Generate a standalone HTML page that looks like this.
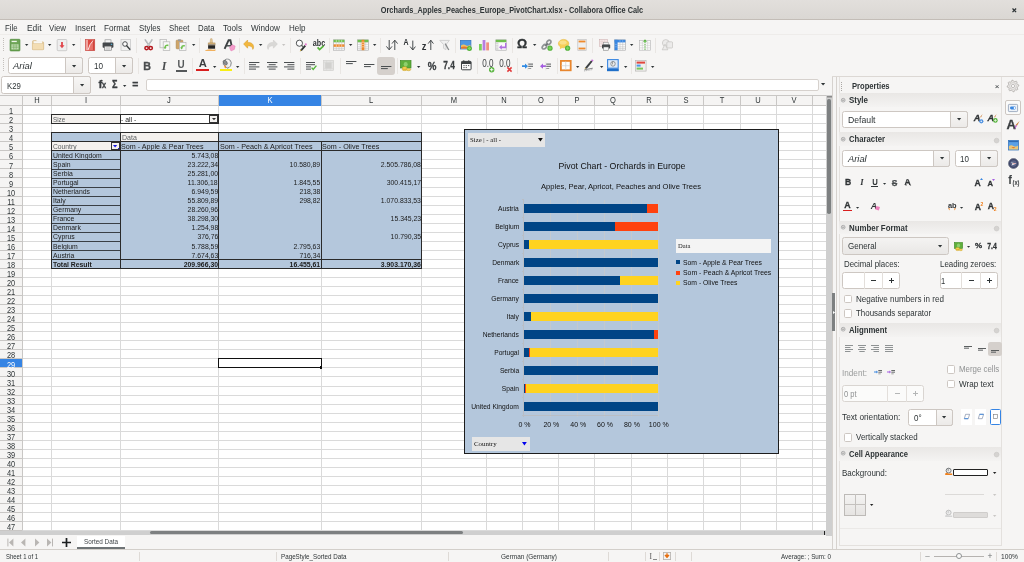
<!DOCTYPE html>
<html lang="en"><head><meta charset="utf-8"><title>Orchards_Apples_Peaches_Europe_PivotChart.xlsx - Collabora Office Calc</title>
<style>
html,body{margin:0;padding:0}
body{width:1024px;height:562px;overflow:hidden;background:#f6f5f4;position:relative;font-family:"Liberation Sans","DejaVu Sans",sans-serif;color:#2e3436}
.sf{font-family:"Liberation Serif","DejaVu Serif",serif}
#app{position:absolute;left:0;top:0;width:1024px;height:562px;overflow:hidden;will-change:transform}
#app div,#app span,#app svg{position:absolute;box-sizing:border-box}
#app svg{overflow:visible}
</style></head>
<body><div id="app">
<div style="left:0.00px;top:0.00px;width:1024.00px;height:20.00px;background:linear-gradient(#e2dfdc,#dad7d3);border-bottom:1px solid #c3bdb7;"></div>
<span id="t1" style="top:5.24px;font-size:8.6px;line-height:10.32px;color:#2e3436;white-space:pre;font-weight:bold;left:512.00px;transform:translateX(-50%) scaleX(0.8531);">Orchards_Apples_Peaches_Europe_PivotChart.xlsx - Collabora Office Calc</span>
<svg style="left:1011.50px;top:7.70px" width="4.6" height="4.6" viewBox="0 0 4.6 4.6"><path d="M0.5 0.5L4.1 4.1M4.1 0.5L0.5 4.1" stroke="#2e3436" stroke-width="1.3"/></svg>
<div style="left:0.00px;top:34.00px;width:1024.00px;height:1.00px;background:#eeecea;"></div>
<span id="t2" style="top:22.54px;font-size:8.6px;line-height:10.32px;color:#2e3436;white-space:pre;left:5.00px;transform-origin:0 50%;transform:scaleX(0.9019);">File</span>
<span id="t3" style="top:22.54px;font-size:8.6px;line-height:10.32px;color:#2e3436;white-space:pre;left:26.50px;transform-origin:0 50%;transform:scaleX(0.9789);">Edit</span>
<span id="t4" style="top:22.54px;font-size:8.6px;line-height:10.32px;color:#2e3436;white-space:pre;left:49.00px;transform-origin:0 50%;transform:scaleX(0.9197);">View</span>
<span id="t5" style="top:22.54px;font-size:8.6px;line-height:10.32px;color:#2e3436;white-space:pre;left:75.00px;transform-origin:0 50%;transform:scaleX(0.9535);">Insert</span>
<span id="t6" style="top:22.54px;font-size:8.6px;line-height:10.32px;color:#2e3436;white-space:pre;left:104.00px;transform-origin:0 50%;transform:scaleX(0.9552);">Format</span>
<span id="t7" style="top:22.54px;font-size:8.6px;line-height:10.32px;color:#2e3436;white-space:pre;left:138.50px;transform-origin:0 50%;transform:scaleX(0.9186);">Styles</span>
<span id="t8" style="top:22.54px;font-size:8.6px;line-height:10.32px;color:#2e3436;white-space:pre;left:168.50px;transform-origin:0 50%;transform:scaleX(0.9124);">Sheet</span>
<span id="t9" style="top:22.54px;font-size:8.6px;line-height:10.32px;color:#2e3436;white-space:pre;left:197.50px;transform-origin:0 50%;transform:scaleX(0.9088);">Data</span>
<span id="t10" style="top:22.54px;font-size:8.6px;line-height:10.32px;color:#2e3436;white-space:pre;left:223.00px;transform-origin:0 50%;transform:scaleX(0.9470);">Tools</span>
<span id="t11" style="top:22.54px;font-size:8.6px;line-height:10.32px;color:#2e3436;white-space:pre;left:250.50px;transform-origin:0 50%;transform:scaleX(0.9484);">Window</span>
<span id="t12" style="top:22.54px;font-size:8.6px;line-height:10.32px;color:#2e3436;white-space:pre;left:288.50px;transform-origin:0 50%;transform:scaleX(0.9329);">Help</span>
<div style="left:2.60px;top:38.00px;width:1.20px;height:1.10px;background:#c4c0bc;"></div>
<div style="left:2.60px;top:40.00px;width:1.20px;height:1.10px;background:#c4c0bc;"></div>
<div style="left:2.60px;top:42.00px;width:1.20px;height:1.10px;background:#c4c0bc;"></div>
<div style="left:2.60px;top:44.00px;width:1.20px;height:1.10px;background:#c4c0bc;"></div>
<div style="left:2.60px;top:46.00px;width:1.20px;height:1.10px;background:#c4c0bc;"></div>
<div style="left:2.60px;top:48.00px;width:1.20px;height:1.10px;background:#c4c0bc;"></div>
<div style="left:2.60px;top:50.00px;width:1.20px;height:1.10px;background:#c4c0bc;"></div>
<div style="left:2.60px;top:58.00px;width:1.20px;height:1.10px;background:#c4c0bc;"></div>
<div style="left:2.60px;top:60.00px;width:1.20px;height:1.10px;background:#c4c0bc;"></div>
<div style="left:2.60px;top:62.00px;width:1.20px;height:1.10px;background:#c4c0bc;"></div>
<div style="left:2.60px;top:64.00px;width:1.20px;height:1.10px;background:#c4c0bc;"></div>
<div style="left:2.60px;top:66.00px;width:1.20px;height:1.10px;background:#c4c0bc;"></div>
<div style="left:2.60px;top:68.00px;width:1.20px;height:1.10px;background:#c4c0bc;"></div>
<div style="left:2.60px;top:70.00px;width:1.20px;height:1.10px;background:#c4c0bc;"></div>
<div style="left:8.00px;top:57.00px;width:75.00px;height:17.00px;background:#ffffff;border:1px solid #cdc7c2;border-radius:2.5px;"></div>
<div style="left:65.00px;top:57.00px;width:18.00px;height:17.00px;background:linear-gradient(#f7f6f5,#eceae8);border:1px solid #cdc7c2;border-radius:0 2.5px 2.5px 0;"></div>
<span id="t13" style="top:60.82px;font-size:8.8px;line-height:10.56px;color:#2e3436;white-space:pre;font-style:italic;left:13.20px;transform-origin:0 50%;transform:scaleX(1.0747);">Arial</span>
<svg style="left:71.90px;top:64.60px" width="4.2" height="2.4" viewBox="0 0 4.2 2.4"><path d="M0 0H4.2L2.1 2.4Z" fill="#2e3436"/></svg>
<div style="left:88.00px;top:57.00px;width:45.00px;height:17.00px;background:#ffffff;border:1px solid #cdc7c2;border-radius:2.5px;"></div>
<div style="left:115.00px;top:57.00px;width:18.00px;height:17.00px;background:linear-gradient(#f7f6f5,#eceae8);border:1px solid #cdc7c2;border-radius:0 2.5px 2.5px 0;"></div>
<span id="t14" style="top:60.82px;font-size:8.8px;line-height:10.56px;color:#2e3436;white-space:pre;left:93.50px;transform-origin:0 50%;transform:scaleX(0.9300);">10</span>
<svg style="left:121.90px;top:64.60px" width="4.2" height="2.4" viewBox="0 0 4.2 2.4"><path d="M0 0H4.2L2.1 2.4Z" fill="#2e3436"/></svg>
<div style="left:0.50px;top:76.30px;width:90.50px;height:17.50px;background:#ffffff;border:1px solid #cdc7c2;border-radius:2.5px;"></div>
<div style="left:73.00px;top:76.30px;width:18.00px;height:17.50px;background:linear-gradient(#f7f6f5,#eceae8);border:1px solid #cdc7c2;border-radius:0 2.5px 2.5px 0;"></div>
<span id="t15" style="top:80.61px;font-size:8.4px;line-height:10.08px;color:#2e3436;white-space:pre;left:6.50px;transform-origin:0 50%;transform:scaleX(0.9300);">K29</span>
<svg style="left:79.90px;top:84.15px" width="4.2" height="2.4" viewBox="0 0 4.2 2.4"><path d="M0 0H4.2L2.1 2.4Z" fill="#2e3436"/></svg>
<span id="t16" style="top:77.56px;font-size:11.4px;line-height:13.68px;color:#3a3e40;white-space:pre;font-weight:bold;left:98.40px;-webkit-text-stroke:0.3px #3a3e40;">f</span>
<span id="t17" style="top:81.48px;font-size:8.2px;line-height:9.84px;color:#3a3e40;white-space:pre;font-weight:bold;left:102.20px;transform-origin:0 50%;transform:scaleX(0.9000);-webkit-text-stroke:0.3px #3a3e40;">x</span>
<span id="t18" style="top:78.88px;font-size:10.2px;line-height:12.24px;color:#3a3e40;white-space:pre;font-weight:bold;left:112.00px;transform-origin:0 50%;transform:scaleX(0.9000);-webkit-text-stroke:0.3px #3a3e40;">Σ</span>
<svg style="left:123.32px;top:84.64px" width="3.3600000000000003" height="1.92" viewBox="0 0 3.3600000000000003 1.92"><path d="M0 0H3.3600000000000003L1.6800000000000002 1.92Z" fill="#2e3436"/></svg>
<span id="t19" style="top:79.36px;font-size:10.4px;line-height:12.48px;color:#3a3e40;white-space:pre;font-weight:bold;left:132.20px;-webkit-text-stroke:0.3px #3a3e40;">=</span>
<div style="left:146.00px;top:79.20px;width:672.50px;height:12.20px;background:#ffffff;border:1px solid #d6d1cd;border-radius:2px;"></div>
<svg style="left:821.20px;top:83.30px" width="4.2" height="2.4" viewBox="0 0 4.2 2.4"><path d="M0 0H4.2L2.1 2.4Z" fill="#2e3436"/></svg>
<div style="left:0.00px;top:529.60px;width:826.00px;height:5.60px;background:#cfcfcf;"></div>
<div style="left:150.00px;top:530.60px;width:313.00px;height:3.60px;background:#7d8081;border-radius:2px;"></div>
<div style="left:823.70px;top:530.40px;width:1.30px;height:4.20px;background:#222;"></div>
<div style="left:826.00px;top:94.50px;width:6.00px;height:441.00px;background:#cfcfcf;"></div>
<div style="left:827.40px;top:99.40px;width:3.50px;height:114.20px;background:#7d8081;border-radius:1.8px;"></div>
<div style="left:826.50px;top:95.50px;width:5.00px;height:1.20px;background:#8a8a8a;"></div>
<div style="left:826.50px;top:97.30px;width:5.00px;height:1.00px;background:#aaaaaa;"></div>
<svg style="left:8.60px;top:538.50px" width="4" height="7" viewBox="0 0 4 7"><path d="M4.4 -0.4L0 3.5L4.4 7.4Z" fill="#b9b6b3"/><rect x="-1.6" y="-0.4" width="1" height="7.8" fill="#b9b6b3"/></svg>
<svg style="left:21.00px;top:538.50px" width="4" height="7" viewBox="0 0 4 7"><path d="M4.4 -0.4L0 3.5L4.4 7.4Z" fill="#b9b6b3"/></svg>
<svg style="left:34.50px;top:538.50px" width="4" height="7" viewBox="0 0 4 7"><path d="M0 -0.4L4.4 3.5L0 7.4Z" fill="#b9b6b3"/></svg>
<svg style="left:46.50px;top:538.50px" width="4" height="7" viewBox="0 0 4 7"><path d="M0 -0.4L4.4 3.5L0 7.4Z" fill="#b9b6b3"/><rect x="5.0" y="-0.4" width="1" height="7.8" fill="#b9b6b3"/></svg>
<svg style="left:61.50px;top:537.50px" width="9" height="9" viewBox="0 0 9 9"><path d="M4.5 0V9M0 4.5H9" stroke="#1c1f20" stroke-width="1.7" fill="none"/></svg>
<div style="left:77.00px;top:535.60px;width:47.50px;height:12.40px;background:#ffffff;"></div>
<div style="left:77.00px;top:547.40px;width:47.50px;height:1.50px;background:#6f7476;"></div>
<span id="t20" style="top:537.32px;font-size:7.8px;line-height:9.36px;color:#43474a;white-space:pre;left:100.50px;transform:translateX(-50%) scaleX(0.8171);">Sorted Data</span>
<div style="left:0.00px;top:548.80px;width:1024.00px;height:1.00px;background:#d3cfca;"></div>
<div style="left:0.00px;top:549.80px;width:1024.00px;height:12.20px;background:#f6f5f4;"></div>
<span id="t21" style="top:551.62px;font-size:7.8px;line-height:9.36px;color:#2e3436;white-space:pre;left:6.00px;transform-origin:0 50%;transform:scaleX(0.7608);">Sheet 1 of 1</span>
<div style="left:138.50px;top:551.50px;width:1.00px;height:9.50px;background:#dedad6;"></div>
<div style="left:276.00px;top:551.50px;width:1.00px;height:9.50px;background:#dedad6;"></div>
<div style="left:448.30px;top:551.50px;width:1.00px;height:9.50px;background:#dedad6;"></div>
<div style="left:608.00px;top:551.50px;width:1.00px;height:9.50px;background:#dedad6;"></div>
<div style="left:645.00px;top:551.50px;width:1.00px;height:9.50px;background:#dedad6;"></div>
<div style="left:659.00px;top:551.50px;width:1.00px;height:9.50px;background:#dedad6;"></div>
<div style="left:675.00px;top:551.50px;width:1.00px;height:9.50px;background:#dedad6;"></div>
<div style="left:690.50px;top:551.50px;width:1.00px;height:9.50px;background:#dedad6;"></div>
<div style="left:920.30px;top:551.50px;width:1.00px;height:9.50px;background:#dedad6;"></div>
<div style="left:996.30px;top:551.50px;width:1.00px;height:9.50px;background:#dedad6;"></div>
<span id="t22" style="top:551.62px;font-size:7.8px;line-height:9.36px;color:#2e3436;white-space:pre;left:281.00px;transform-origin:0 50%;transform:scaleX(0.8025);">PageStyle_Sorted Data</span>
<span id="t23" style="top:551.62px;font-size:7.8px;line-height:9.36px;color:#2e3436;white-space:pre;left:528.90px;transform:translateX(-50%) scaleX(0.8255);">German (Germany)</span>
<span id="t24" class="sf" style="top:551.70px;font-size:7.5px;line-height:9.00px;color:#555;white-space:pre;left:649.50px;">I</span>
<div style="left:653.00px;top:558.60px;width:3.50px;height:0.80px;background:#888;"></div>
<svg style="left:662.50px;top:552.00px" width="8" height="8" viewBox="0 0 8 8"><rect x="0.4" y="0.4" width="7.2" height="7.2" fill="#f4f2f0" stroke="#b5b1ad" stroke-width="0.8"/><path d="M4 1.2V4.4M2.3 3.4L4 5.4L5.7 3.4Z" stroke="#e66f10" stroke-width="1.3" fill="#e66f10" stroke-linejoin="round"/></svg>
<span id="t25" style="top:551.62px;font-size:7.8px;line-height:9.36px;color:#2e3436;white-space:pre;left:781.00px;transform-origin:0 50%;transform:scaleX(0.8030);">Average: ; Sum: 0</span>
<span id="t26" style="top:551.00px;font-size:8px;line-height:9.60px;color:#6e7273;white-space:pre;left:927.50px;transform:translateX(-50%);">–</span>
<div style="left:933.80px;top:555.70px;width:50.70px;height:1.20px;background:#b6b3b0;"></div>
<div style="left:955.90px;top:553.00px;width:6.00px;height:6.00px;background:#fbfbfa;border:1px solid #8e9192;border-radius:50%;"></div>
<span id="t27" style="top:550.90px;font-size:8.5px;line-height:10.20px;color:#6e7273;white-space:pre;left:990.00px;transform:translateX(-50%);">+</span>
<span id="t28" style="top:551.62px;font-size:7.8px;line-height:9.36px;color:#2e3436;white-space:pre;left:1000.80px;transform-origin:0 50%;transform:scaleX(0.8520);">100%</span>
<div style="left:0.00px;top:94.50px;width:826.00px;height:435.10px;background:#ffffff;"></div>
<div style="left:0.00px;top:94.50px;width:826.00px;height:11.10px;background:#f5f4f3;border-top:1px solid #c9c7c5;border-bottom:1px solid #c9c7c5;"></div>
<div style="left:0.00px;top:105.60px;width:22.50px;height:424.00px;background:#f5f4f3;"></div>
<div style="left:22.00px;top:94.50px;width:1.00px;height:435.10px;background:#c9c7c5;"></div>
<span id="t29" style="top:95.31px;font-size:8.4px;line-height:10.08px;color:#2e3436;white-space:pre;left:37.00px;transform:translateX(-50%) scaleX(0.9000);">H</span>
<div style="left:51.00px;top:94.50px;width:1.00px;height:11.10px;background:#c9c7c5;"></div>
<div style="left:51.00px;top:105.60px;width:1.00px;height:424.00px;background:#dadada;"></div>
<span id="t30" style="top:95.31px;font-size:8.4px;line-height:10.08px;color:#2e3436;white-space:pre;left:85.85px;transform:translateX(-50%) scaleX(0.9000);">I</span>
<div style="left:119.70px;top:94.50px;width:1.00px;height:11.10px;background:#c9c7c5;"></div>
<div style="left:119.70px;top:105.60px;width:1.00px;height:424.00px;background:#dadada;"></div>
<span id="t31" style="top:95.31px;font-size:8.4px;line-height:10.08px;color:#2e3436;white-space:pre;left:169.40px;transform:translateX(-50%) scaleX(0.9000);">J</span>
<div style="left:218.10px;top:94.50px;width:1.00px;height:11.10px;background:#c9c7c5;"></div>
<div style="left:218.10px;top:105.60px;width:1.00px;height:424.00px;background:#dadada;"></div>
<div style="left:218.60px;top:94.50px;width:102.60px;height:11.10px;background:#3584e4;"></div>
<span id="t32" style="top:95.31px;font-size:8.4px;line-height:10.08px;color:#ffffff;white-space:pre;left:269.90px;transform:translateX(-50%) scaleX(0.9000);">K</span>
<div style="left:320.70px;top:94.50px;width:1.00px;height:11.10px;background:#c9c7c5;"></div>
<div style="left:320.70px;top:105.60px;width:1.00px;height:424.00px;background:#dadada;"></div>
<span id="t33" style="top:95.31px;font-size:8.4px;line-height:10.08px;color:#2e3436;white-space:pre;left:371.35px;transform:translateX(-50%) scaleX(0.9000);">L</span>
<div style="left:421.00px;top:94.50px;width:1.00px;height:11.10px;background:#c9c7c5;"></div>
<div style="left:421.00px;top:105.60px;width:1.00px;height:424.00px;background:#dadada;"></div>
<span id="t34" style="top:95.31px;font-size:8.4px;line-height:10.08px;color:#2e3436;white-space:pre;left:453.85px;transform:translateX(-50%) scaleX(0.9000);">M</span>
<div style="left:485.70px;top:94.50px;width:1.00px;height:11.10px;background:#c9c7c5;"></div>
<div style="left:485.70px;top:105.60px;width:1.00px;height:424.00px;background:#dadada;"></div>
<span id="t35" style="top:95.31px;font-size:8.4px;line-height:10.08px;color:#2e3436;white-space:pre;left:504.35px;transform:translateX(-50%) scaleX(0.9000);">N</span>
<div style="left:522.00px;top:94.50px;width:1.00px;height:11.10px;background:#c9c7c5;"></div>
<div style="left:522.00px;top:105.60px;width:1.00px;height:424.00px;background:#dadada;"></div>
<span id="t36" style="top:95.31px;font-size:8.4px;line-height:10.08px;color:#2e3436;white-space:pre;left:540.55px;transform:translateX(-50%) scaleX(0.9000);">O</span>
<div style="left:558.10px;top:94.50px;width:1.00px;height:11.10px;background:#c9c7c5;"></div>
<div style="left:558.10px;top:105.60px;width:1.00px;height:424.00px;background:#dadada;"></div>
<span id="t37" style="top:95.31px;font-size:8.4px;line-height:10.08px;color:#2e3436;white-space:pre;left:576.70px;transform:translateX(-50%) scaleX(0.9000);">P</span>
<div style="left:594.30px;top:94.50px;width:1.00px;height:11.10px;background:#c9c7c5;"></div>
<div style="left:594.30px;top:105.60px;width:1.00px;height:424.00px;background:#dadada;"></div>
<span id="t38" style="top:95.31px;font-size:8.4px;line-height:10.08px;color:#2e3436;white-space:pre;left:612.95px;transform:translateX(-50%) scaleX(0.9000);">Q</span>
<div style="left:630.60px;top:94.50px;width:1.00px;height:11.10px;background:#c9c7c5;"></div>
<div style="left:630.60px;top:105.60px;width:1.00px;height:424.00px;background:#dadada;"></div>
<span id="t39" style="top:95.31px;font-size:8.4px;line-height:10.08px;color:#2e3436;white-space:pre;left:649.25px;transform:translateX(-50%) scaleX(0.9000);">R</span>
<div style="left:666.90px;top:94.50px;width:1.00px;height:11.10px;background:#c9c7c5;"></div>
<div style="left:666.90px;top:105.60px;width:1.00px;height:424.00px;background:#dadada;"></div>
<span id="t40" style="top:95.31px;font-size:8.4px;line-height:10.08px;color:#2e3436;white-space:pre;left:685.55px;transform:translateX(-50%) scaleX(0.9000);">S</span>
<div style="left:703.20px;top:94.50px;width:1.00px;height:11.10px;background:#c9c7c5;"></div>
<div style="left:703.20px;top:105.60px;width:1.00px;height:424.00px;background:#dadada;"></div>
<span id="t41" style="top:95.31px;font-size:8.4px;line-height:10.08px;color:#2e3436;white-space:pre;left:721.85px;transform:translateX(-50%) scaleX(0.9000);">T</span>
<div style="left:739.50px;top:94.50px;width:1.00px;height:11.10px;background:#c9c7c5;"></div>
<div style="left:739.50px;top:105.60px;width:1.00px;height:424.00px;background:#dadada;"></div>
<span id="t42" style="top:95.31px;font-size:8.4px;line-height:10.08px;color:#2e3436;white-space:pre;left:758.10px;transform:translateX(-50%) scaleX(0.9000);">U</span>
<div style="left:775.70px;top:94.50px;width:1.00px;height:11.10px;background:#c9c7c5;"></div>
<div style="left:775.70px;top:105.60px;width:1.00px;height:424.00px;background:#dadada;"></div>
<span id="t43" style="top:95.31px;font-size:8.4px;line-height:10.08px;color:#2e3436;white-space:pre;left:794.35px;transform:translateX(-50%) scaleX(0.9000);">V</span>
<div style="left:812.00px;top:94.50px;width:1.00px;height:11.10px;background:#c9c7c5;"></div>
<div style="left:812.00px;top:105.60px;width:1.00px;height:424.00px;background:#dadada;"></div>
<span id="t44" style="top:95.31px;font-size:8.4px;line-height:10.08px;color:#2e3436;white-space:pre;left:819.25px;transform:translateX(-50%) scaleX(0.9000);"></span>
<div style="left:0.00px;top:114.14px;width:22.00px;height:1.00px;background:#c9c7c5;"></div>
<div style="left:22.50px;top:114.14px;width:803.50px;height:1.00px;background:#dadada;"></div>
<div style="left:0.00px;top:123.19px;width:22.00px;height:1.00px;background:#c9c7c5;"></div>
<div style="left:22.50px;top:123.19px;width:803.50px;height:1.00px;background:#dadada;"></div>
<div style="left:0.00px;top:132.23px;width:22.00px;height:1.00px;background:#c9c7c5;"></div>
<div style="left:22.50px;top:132.23px;width:803.50px;height:1.00px;background:#dadada;"></div>
<div style="left:0.00px;top:141.28px;width:22.00px;height:1.00px;background:#c9c7c5;"></div>
<div style="left:22.50px;top:141.28px;width:803.50px;height:1.00px;background:#dadada;"></div>
<div style="left:0.00px;top:150.32px;width:22.00px;height:1.00px;background:#c9c7c5;"></div>
<div style="left:22.50px;top:150.32px;width:803.50px;height:1.00px;background:#dadada;"></div>
<div style="left:0.00px;top:159.37px;width:22.00px;height:1.00px;background:#c9c7c5;"></div>
<div style="left:22.50px;top:159.37px;width:803.50px;height:1.00px;background:#dadada;"></div>
<div style="left:0.00px;top:168.41px;width:22.00px;height:1.00px;background:#c9c7c5;"></div>
<div style="left:22.50px;top:168.41px;width:803.50px;height:1.00px;background:#dadada;"></div>
<div style="left:0.00px;top:177.46px;width:22.00px;height:1.00px;background:#c9c7c5;"></div>
<div style="left:22.50px;top:177.46px;width:803.50px;height:1.00px;background:#dadada;"></div>
<div style="left:0.00px;top:186.50px;width:22.00px;height:1.00px;background:#c9c7c5;"></div>
<div style="left:22.50px;top:186.50px;width:803.50px;height:1.00px;background:#dadada;"></div>
<div style="left:0.00px;top:195.55px;width:22.00px;height:1.00px;background:#c9c7c5;"></div>
<div style="left:22.50px;top:195.55px;width:803.50px;height:1.00px;background:#dadada;"></div>
<div style="left:0.00px;top:204.59px;width:22.00px;height:1.00px;background:#c9c7c5;"></div>
<div style="left:22.50px;top:204.59px;width:803.50px;height:1.00px;background:#dadada;"></div>
<div style="left:0.00px;top:213.64px;width:22.00px;height:1.00px;background:#c9c7c5;"></div>
<div style="left:22.50px;top:213.64px;width:803.50px;height:1.00px;background:#dadada;"></div>
<div style="left:0.00px;top:222.68px;width:22.00px;height:1.00px;background:#c9c7c5;"></div>
<div style="left:22.50px;top:222.68px;width:803.50px;height:1.00px;background:#dadada;"></div>
<div style="left:0.00px;top:231.73px;width:22.00px;height:1.00px;background:#c9c7c5;"></div>
<div style="left:22.50px;top:231.73px;width:803.50px;height:1.00px;background:#dadada;"></div>
<div style="left:0.00px;top:240.77px;width:22.00px;height:1.00px;background:#c9c7c5;"></div>
<div style="left:22.50px;top:240.77px;width:803.50px;height:1.00px;background:#dadada;"></div>
<div style="left:0.00px;top:249.82px;width:22.00px;height:1.00px;background:#c9c7c5;"></div>
<div style="left:22.50px;top:249.82px;width:803.50px;height:1.00px;background:#dadada;"></div>
<div style="left:0.00px;top:258.87px;width:22.00px;height:1.00px;background:#c9c7c5;"></div>
<div style="left:22.50px;top:258.87px;width:803.50px;height:1.00px;background:#dadada;"></div>
<div style="left:0.00px;top:267.91px;width:22.00px;height:1.00px;background:#c9c7c5;"></div>
<div style="left:22.50px;top:267.91px;width:803.50px;height:1.00px;background:#dadada;"></div>
<div style="left:0.00px;top:276.95px;width:22.00px;height:1.00px;background:#c9c7c5;"></div>
<div style="left:22.50px;top:276.95px;width:803.50px;height:1.00px;background:#dadada;"></div>
<div style="left:0.00px;top:286.00px;width:22.00px;height:1.00px;background:#c9c7c5;"></div>
<div style="left:22.50px;top:286.00px;width:803.50px;height:1.00px;background:#dadada;"></div>
<div style="left:0.00px;top:295.05px;width:22.00px;height:1.00px;background:#c9c7c5;"></div>
<div style="left:22.50px;top:295.05px;width:803.50px;height:1.00px;background:#dadada;"></div>
<div style="left:0.00px;top:304.09px;width:22.00px;height:1.00px;background:#c9c7c5;"></div>
<div style="left:22.50px;top:304.09px;width:803.50px;height:1.00px;background:#dadada;"></div>
<div style="left:0.00px;top:313.14px;width:22.00px;height:1.00px;background:#c9c7c5;"></div>
<div style="left:22.50px;top:313.14px;width:803.50px;height:1.00px;background:#dadada;"></div>
<div style="left:0.00px;top:322.18px;width:22.00px;height:1.00px;background:#c9c7c5;"></div>
<div style="left:22.50px;top:322.18px;width:803.50px;height:1.00px;background:#dadada;"></div>
<div style="left:0.00px;top:331.22px;width:22.00px;height:1.00px;background:#c9c7c5;"></div>
<div style="left:22.50px;top:331.22px;width:803.50px;height:1.00px;background:#dadada;"></div>
<div style="left:0.00px;top:340.27px;width:22.00px;height:1.00px;background:#c9c7c5;"></div>
<div style="left:22.50px;top:340.27px;width:803.50px;height:1.00px;background:#dadada;"></div>
<div style="left:0.00px;top:349.31px;width:22.00px;height:1.00px;background:#c9c7c5;"></div>
<div style="left:22.50px;top:349.31px;width:803.50px;height:1.00px;background:#dadada;"></div>
<div style="left:0.00px;top:358.36px;width:22.00px;height:1.00px;background:#c9c7c5;"></div>
<div style="left:22.50px;top:358.36px;width:803.50px;height:1.00px;background:#dadada;"></div>
<div style="left:0.00px;top:358.86px;width:22.00px;height:9.04px;background:#3584e4;"></div>
<div style="left:0.00px;top:367.41px;width:22.00px;height:1.00px;background:#c9c7c5;"></div>
<div style="left:22.50px;top:367.41px;width:803.50px;height:1.00px;background:#dadada;"></div>
<div style="left:0.00px;top:376.45px;width:22.00px;height:1.00px;background:#c9c7c5;"></div>
<div style="left:22.50px;top:376.45px;width:803.50px;height:1.00px;background:#dadada;"></div>
<div style="left:0.00px;top:385.50px;width:22.00px;height:1.00px;background:#c9c7c5;"></div>
<div style="left:22.50px;top:385.50px;width:803.50px;height:1.00px;background:#dadada;"></div>
<div style="left:0.00px;top:394.54px;width:22.00px;height:1.00px;background:#c9c7c5;"></div>
<div style="left:22.50px;top:394.54px;width:803.50px;height:1.00px;background:#dadada;"></div>
<div style="left:0.00px;top:403.58px;width:22.00px;height:1.00px;background:#c9c7c5;"></div>
<div style="left:22.50px;top:403.58px;width:803.50px;height:1.00px;background:#dadada;"></div>
<div style="left:0.00px;top:412.63px;width:22.00px;height:1.00px;background:#c9c7c5;"></div>
<div style="left:22.50px;top:412.63px;width:803.50px;height:1.00px;background:#dadada;"></div>
<div style="left:0.00px;top:421.68px;width:22.00px;height:1.00px;background:#c9c7c5;"></div>
<div style="left:22.50px;top:421.68px;width:803.50px;height:1.00px;background:#dadada;"></div>
<div style="left:0.00px;top:430.72px;width:22.00px;height:1.00px;background:#c9c7c5;"></div>
<div style="left:22.50px;top:430.72px;width:803.50px;height:1.00px;background:#dadada;"></div>
<div style="left:0.00px;top:439.77px;width:22.00px;height:1.00px;background:#c9c7c5;"></div>
<div style="left:22.50px;top:439.77px;width:803.50px;height:1.00px;background:#dadada;"></div>
<div style="left:0.00px;top:448.81px;width:22.00px;height:1.00px;background:#c9c7c5;"></div>
<div style="left:22.50px;top:448.81px;width:803.50px;height:1.00px;background:#dadada;"></div>
<div style="left:0.00px;top:457.85px;width:22.00px;height:1.00px;background:#c9c7c5;"></div>
<div style="left:22.50px;top:457.85px;width:803.50px;height:1.00px;background:#dadada;"></div>
<div style="left:0.00px;top:466.90px;width:22.00px;height:1.00px;background:#c9c7c5;"></div>
<div style="left:22.50px;top:466.90px;width:803.50px;height:1.00px;background:#dadada;"></div>
<div style="left:0.00px;top:475.94px;width:22.00px;height:1.00px;background:#c9c7c5;"></div>
<div style="left:22.50px;top:475.94px;width:803.50px;height:1.00px;background:#dadada;"></div>
<div style="left:0.00px;top:484.99px;width:22.00px;height:1.00px;background:#c9c7c5;"></div>
<div style="left:22.50px;top:484.99px;width:803.50px;height:1.00px;background:#dadada;"></div>
<div style="left:0.00px;top:494.04px;width:22.00px;height:1.00px;background:#c9c7c5;"></div>
<div style="left:22.50px;top:494.04px;width:803.50px;height:1.00px;background:#dadada;"></div>
<div style="left:0.00px;top:503.08px;width:22.00px;height:1.00px;background:#c9c7c5;"></div>
<div style="left:22.50px;top:503.08px;width:803.50px;height:1.00px;background:#dadada;"></div>
<div style="left:0.00px;top:512.12px;width:22.00px;height:1.00px;background:#c9c7c5;"></div>
<div style="left:22.50px;top:512.12px;width:803.50px;height:1.00px;background:#dadada;"></div>
<div style="left:0.00px;top:521.17px;width:22.00px;height:1.00px;background:#c9c7c5;"></div>
<div style="left:22.50px;top:521.17px;width:803.50px;height:1.00px;background:#dadada;"></div>
<div style="left:0.00px;top:530.21px;width:22.00px;height:1.00px;background:#c9c7c5;"></div>
<div style="left:22.50px;top:530.21px;width:803.50px;height:1.00px;background:#dadada;"></div>
<span id="t45" style="top:106.26px;font-size:8.6px;line-height:10.32px;color:#2e3436;white-space:pre;left:11.30px;transform:translateX(-50%) scaleX(0.8600);">1</span>
<span id="t46" style="top:115.31px;font-size:8.6px;line-height:10.32px;color:#2e3436;white-space:pre;left:11.30px;transform:translateX(-50%) scaleX(0.8600);">2</span>
<span id="t47" style="top:124.35px;font-size:8.6px;line-height:10.32px;color:#2e3436;white-space:pre;left:11.30px;transform:translateX(-50%) scaleX(0.8600);">3</span>
<span id="t48" style="top:133.40px;font-size:8.6px;line-height:10.32px;color:#2e3436;white-space:pre;left:11.30px;transform:translateX(-50%) scaleX(0.8600);">4</span>
<span id="t49" style="top:142.44px;font-size:8.6px;line-height:10.32px;color:#2e3436;white-space:pre;left:11.30px;transform:translateX(-50%) scaleX(0.8600);">5</span>
<span id="t50" style="top:151.49px;font-size:8.6px;line-height:10.32px;color:#2e3436;white-space:pre;left:11.30px;transform:translateX(-50%) scaleX(0.8600);">6</span>
<span id="t51" style="top:160.53px;font-size:8.6px;line-height:10.32px;color:#2e3436;white-space:pre;left:11.30px;transform:translateX(-50%) scaleX(0.8600);">7</span>
<span id="t52" style="top:169.58px;font-size:8.6px;line-height:10.32px;color:#2e3436;white-space:pre;left:11.30px;transform:translateX(-50%) scaleX(0.8600);">8</span>
<span id="t53" style="top:178.62px;font-size:8.6px;line-height:10.32px;color:#2e3436;white-space:pre;left:11.30px;transform:translateX(-50%) scaleX(0.8600);">9</span>
<span id="t54" style="top:187.67px;font-size:8.6px;line-height:10.32px;color:#2e3436;white-space:pre;left:11.30px;transform:translateX(-50%) scaleX(0.8600);">10</span>
<span id="t55" style="top:196.71px;font-size:8.6px;line-height:10.32px;color:#2e3436;white-space:pre;left:11.30px;transform:translateX(-50%) scaleX(0.8600);">11</span>
<span id="t56" style="top:205.76px;font-size:8.6px;line-height:10.32px;color:#2e3436;white-space:pre;left:11.30px;transform:translateX(-50%) scaleX(0.8600);">12</span>
<span id="t57" style="top:214.80px;font-size:8.6px;line-height:10.32px;color:#2e3436;white-space:pre;left:11.30px;transform:translateX(-50%) scaleX(0.8600);">13</span>
<span id="t58" style="top:223.85px;font-size:8.6px;line-height:10.32px;color:#2e3436;white-space:pre;left:11.30px;transform:translateX(-50%) scaleX(0.8600);">14</span>
<span id="t59" style="top:232.89px;font-size:8.6px;line-height:10.32px;color:#2e3436;white-space:pre;left:11.30px;transform:translateX(-50%) scaleX(0.8600);">15</span>
<span id="t60" style="top:241.94px;font-size:8.6px;line-height:10.32px;color:#2e3436;white-space:pre;left:11.30px;transform:translateX(-50%) scaleX(0.8600);">16</span>
<span id="t61" style="top:250.98px;font-size:8.6px;line-height:10.32px;color:#2e3436;white-space:pre;left:11.30px;transform:translateX(-50%) scaleX(0.8600);">17</span>
<span id="t62" style="top:260.03px;font-size:8.6px;line-height:10.32px;color:#2e3436;white-space:pre;left:11.30px;transform:translateX(-50%) scaleX(0.8600);">18</span>
<span id="t63" style="top:269.07px;font-size:8.6px;line-height:10.32px;color:#2e3436;white-space:pre;left:11.30px;transform:translateX(-50%) scaleX(0.8600);">19</span>
<span id="t64" style="top:278.12px;font-size:8.6px;line-height:10.32px;color:#2e3436;white-space:pre;left:11.30px;transform:translateX(-50%) scaleX(0.8600);">20</span>
<span id="t65" style="top:287.16px;font-size:8.6px;line-height:10.32px;color:#2e3436;white-space:pre;left:11.30px;transform:translateX(-50%) scaleX(0.8600);">21</span>
<span id="t66" style="top:296.21px;font-size:8.6px;line-height:10.32px;color:#2e3436;white-space:pre;left:11.30px;transform:translateX(-50%) scaleX(0.8600);">22</span>
<span id="t67" style="top:305.25px;font-size:8.6px;line-height:10.32px;color:#2e3436;white-space:pre;left:11.30px;transform:translateX(-50%) scaleX(0.8600);">23</span>
<span id="t68" style="top:314.30px;font-size:8.6px;line-height:10.32px;color:#2e3436;white-space:pre;left:11.30px;transform:translateX(-50%) scaleX(0.8600);">24</span>
<span id="t69" style="top:323.34px;font-size:8.6px;line-height:10.32px;color:#2e3436;white-space:pre;left:11.30px;transform:translateX(-50%) scaleX(0.8600);">25</span>
<span id="t70" style="top:332.39px;font-size:8.6px;line-height:10.32px;color:#2e3436;white-space:pre;left:11.30px;transform:translateX(-50%) scaleX(0.8600);">26</span>
<span id="t71" style="top:341.43px;font-size:8.6px;line-height:10.32px;color:#2e3436;white-space:pre;left:11.30px;transform:translateX(-50%) scaleX(0.8600);">27</span>
<span id="t72" style="top:350.48px;font-size:8.6px;line-height:10.32px;color:#2e3436;white-space:pre;left:11.30px;transform:translateX(-50%) scaleX(0.8600);">28</span>
<span id="t73" style="top:359.52px;font-size:8.6px;line-height:10.32px;color:#ffffff;white-space:pre;left:11.30px;transform:translateX(-50%) scaleX(0.8600);">29</span>
<span id="t74" style="top:368.57px;font-size:8.6px;line-height:10.32px;color:#2e3436;white-space:pre;left:11.30px;transform:translateX(-50%) scaleX(0.8600);">30</span>
<span id="t75" style="top:377.61px;font-size:8.6px;line-height:10.32px;color:#2e3436;white-space:pre;left:11.30px;transform:translateX(-50%) scaleX(0.8600);">31</span>
<span id="t76" style="top:386.66px;font-size:8.6px;line-height:10.32px;color:#2e3436;white-space:pre;left:11.30px;transform:translateX(-50%) scaleX(0.8600);">32</span>
<span id="t77" style="top:395.70px;font-size:8.6px;line-height:10.32px;color:#2e3436;white-space:pre;left:11.30px;transform:translateX(-50%) scaleX(0.8600);">33</span>
<span id="t78" style="top:404.75px;font-size:8.6px;line-height:10.32px;color:#2e3436;white-space:pre;left:11.30px;transform:translateX(-50%) scaleX(0.8600);">34</span>
<span id="t79" style="top:413.79px;font-size:8.6px;line-height:10.32px;color:#2e3436;white-space:pre;left:11.30px;transform:translateX(-50%) scaleX(0.8600);">35</span>
<span id="t80" style="top:422.84px;font-size:8.6px;line-height:10.32px;color:#2e3436;white-space:pre;left:11.30px;transform:translateX(-50%) scaleX(0.8600);">36</span>
<span id="t81" style="top:431.88px;font-size:8.6px;line-height:10.32px;color:#2e3436;white-space:pre;left:11.30px;transform:translateX(-50%) scaleX(0.8600);">37</span>
<span id="t82" style="top:440.93px;font-size:8.6px;line-height:10.32px;color:#2e3436;white-space:pre;left:11.30px;transform:translateX(-50%) scaleX(0.8600);">38</span>
<span id="t83" style="top:449.97px;font-size:8.6px;line-height:10.32px;color:#2e3436;white-space:pre;left:11.30px;transform:translateX(-50%) scaleX(0.8600);">39</span>
<span id="t84" style="top:459.02px;font-size:8.6px;line-height:10.32px;color:#2e3436;white-space:pre;left:11.30px;transform:translateX(-50%) scaleX(0.8600);">40</span>
<span id="t85" style="top:468.06px;font-size:8.6px;line-height:10.32px;color:#2e3436;white-space:pre;left:11.30px;transform:translateX(-50%) scaleX(0.8600);">41</span>
<span id="t86" style="top:477.11px;font-size:8.6px;line-height:10.32px;color:#2e3436;white-space:pre;left:11.30px;transform:translateX(-50%) scaleX(0.8600);">42</span>
<span id="t87" style="top:486.15px;font-size:8.6px;line-height:10.32px;color:#2e3436;white-space:pre;left:11.30px;transform:translateX(-50%) scaleX(0.8600);">43</span>
<span id="t88" style="top:495.20px;font-size:8.6px;line-height:10.32px;color:#2e3436;white-space:pre;left:11.30px;transform:translateX(-50%) scaleX(0.8600);">44</span>
<span id="t89" style="top:504.24px;font-size:8.6px;line-height:10.32px;color:#2e3436;white-space:pre;left:11.30px;transform:translateX(-50%) scaleX(0.8600);">45</span>
<span id="t90" style="top:513.29px;font-size:8.6px;line-height:10.32px;color:#2e3436;white-space:pre;left:11.30px;transform:translateX(-50%) scaleX(0.8600);">46</span>
<span id="t91" style="top:522.33px;font-size:8.6px;line-height:10.32px;color:#2e3436;white-space:pre;left:11.30px;transform:translateX(-50%) scaleX(0.8600);">47</span>
<div style="left:51.50px;top:114.64px;width:68.70px;height:9.04px;background:#f4f1ee;"></div>
<div style="left:120.20px;top:114.64px;width:98.40px;height:9.04px;background:#ffffff;"></div>
<div style="left:51.00px;top:114.09px;width:168.10px;height:1.10px;background:#2a2a2a;"></div>
<div style="left:51.00px;top:123.14px;width:168.10px;height:1.10px;background:#2a2a2a;"></div>
<div style="left:50.95px;top:114.64px;width:1.10px;height:9.05px;background:#2a2a2a;"></div>
<div style="left:119.65px;top:114.64px;width:1.10px;height:9.05px;background:#2a2a2a;"></div>
<div style="left:218.05px;top:114.64px;width:1.10px;height:9.05px;background:#2a2a2a;"></div>
<span id="t92" style="top:115.09px;font-size:7.8px;line-height:9.36px;color:#5e6264;white-space:pre;left:52.90px;transform-origin:0 50%;transform:scaleX(0.8107);">Size</span>
<span id="t93" style="top:115.87px;font-size:7.0px;line-height:8.40px;color:#1c1c1c;white-space:pre;left:121.20px;transform-origin:0 50%;transform:scaleX(0.9800);">- all -</span>
<div style="left:209.00px;top:115.24px;width:9.20px;height:7.84px;background:#f4f2f0;border:1px solid #333;"></div>
<svg style="left:211.60px;top:118.23px" width="3.9899999999999998" height="2.28" viewBox="0 0 3.9899999999999998 2.28"><path d="M0 0H3.9899999999999998L1.9949999999999999 2.28Z" fill="#333"/></svg>
<div style="left:51.50px;top:132.73px;width:370.00px;height:135.67px;background:#b4c7dc;"></div>
<div style="left:120.20px;top:132.73px;width:98.40px;height:9.04px;background:#f4f1ee;"></div>
<div style="left:51.50px;top:141.78px;width:68.70px;height:9.04px;background:#f4f1ee;"></div>
<span id="t94" style="top:133.18px;font-size:7.8px;line-height:9.36px;color:#5e6264;white-space:pre;left:121.80px;transform-origin:0 50%;transform:scaleX(0.8978);">Data</span>
<span id="t95" style="top:142.22px;font-size:7.8px;line-height:9.36px;color:#5e6264;white-space:pre;left:52.90px;transform-origin:0 50%;transform:scaleX(0.8641);">Country</span>
<div style="left:110.60px;top:142.38px;width:9.20px;height:7.84px;background:#f4f2f0;border:1px solid #333;"></div>
<svg style="left:112.90px;top:145.20px" width="4.2" height="2.4" viewBox="0 0 4.2 2.4"><path d="M0 0H4.2L2.1 2.4Z" fill="#1a1ae0"/></svg>
<div style="left:117.60px;top:148.02px;width:1.40px;height:1.40px;background:#1a1ae0;"></div>
<span id="t96" style="top:143.00px;font-size:7.0px;line-height:8.40px;color:#1c1c1c;white-space:pre;left:121.20px;transform-origin:0 50%;transform:scaleX(1.0212);">Som - Apple &amp; Pear Trees</span>
<span id="t97" style="top:143.00px;font-size:7.0px;line-height:8.40px;color:#1c1c1c;white-space:pre;left:219.60px;transform-origin:0 50%;transform:scaleX(1.0298);">Som - Peach &amp; Apricot Trees</span>
<span id="t98" style="top:143.00px;font-size:7.0px;line-height:8.40px;color:#1c1c1c;white-space:pre;left:322.20px;transform-origin:0 50%;transform:scaleX(1.0256);">Som - Olive Trees</span>
<span id="t99" style="top:152.05px;font-size:7.0px;line-height:8.40px;color:#1c1c1c;white-space:pre;left:52.50px;transform-origin:0 50%;transform:scaleX(0.9800);">United Kingdom</span>
<span id="t100" style="top:152.05px;font-size:7.0px;line-height:8.40px;color:#1c1c1c;white-space:pre;right:806.00px;transform-origin:100% 50%;transform:scaleX(0.9800);">5.743,08</span>
<div style="left:51.50px;top:159.47px;width:68.70px;height:0.80px;background:#3a3f45;"></div>
<span id="t101" style="top:161.09px;font-size:7.0px;line-height:8.40px;color:#1c1c1c;white-space:pre;left:52.50px;transform-origin:0 50%;transform:scaleX(0.9800);">Spain</span>
<span id="t102" style="top:161.09px;font-size:7.0px;line-height:8.40px;color:#1c1c1c;white-space:pre;right:806.00px;transform-origin:100% 50%;transform:scaleX(0.9800);">23.222,34</span>
<span id="t103" style="top:161.09px;font-size:7.0px;line-height:8.40px;color:#1c1c1c;white-space:pre;right:703.40px;transform-origin:100% 50%;transform:scaleX(0.9800);">10.580,89</span>
<span id="t104" style="top:161.09px;font-size:7.0px;line-height:8.40px;color:#1c1c1c;white-space:pre;right:603.10px;transform-origin:100% 50%;transform:scaleX(0.9800);">2.505.786,08</span>
<div style="left:51.50px;top:168.51px;width:68.70px;height:0.80px;background:#3a3f45;"></div>
<span id="t105" style="top:170.14px;font-size:7.0px;line-height:8.40px;color:#1c1c1c;white-space:pre;left:52.50px;transform-origin:0 50%;transform:scaleX(0.9800);">Serbia</span>
<span id="t106" style="top:170.14px;font-size:7.0px;line-height:8.40px;color:#1c1c1c;white-space:pre;right:806.00px;transform-origin:100% 50%;transform:scaleX(0.9800);">25.281,00</span>
<div style="left:51.50px;top:177.56px;width:68.70px;height:0.80px;background:#3a3f45;"></div>
<span id="t107" style="top:179.18px;font-size:7.0px;line-height:8.40px;color:#1c1c1c;white-space:pre;left:52.50px;transform-origin:0 50%;transform:scaleX(0.9800);">Portugal</span>
<span id="t108" style="top:179.18px;font-size:7.0px;line-height:8.40px;color:#1c1c1c;white-space:pre;right:806.00px;transform-origin:100% 50%;transform:scaleX(0.9800);">11.306,18</span>
<span id="t109" style="top:179.18px;font-size:7.0px;line-height:8.40px;color:#1c1c1c;white-space:pre;right:703.40px;transform-origin:100% 50%;transform:scaleX(0.9800);">1.845,55</span>
<span id="t110" style="top:179.18px;font-size:7.0px;line-height:8.40px;color:#1c1c1c;white-space:pre;right:603.10px;transform-origin:100% 50%;transform:scaleX(0.9800);">300.415,17</span>
<div style="left:51.50px;top:186.60px;width:68.70px;height:0.80px;background:#3a3f45;"></div>
<span id="t111" style="top:188.23px;font-size:7.0px;line-height:8.40px;color:#1c1c1c;white-space:pre;left:52.50px;transform-origin:0 50%;transform:scaleX(0.9800);">Netherlands</span>
<span id="t112" style="top:188.23px;font-size:7.0px;line-height:8.40px;color:#1c1c1c;white-space:pre;right:806.00px;transform-origin:100% 50%;transform:scaleX(0.9800);">6.949,59</span>
<span id="t113" style="top:188.23px;font-size:7.0px;line-height:8.40px;color:#1c1c1c;white-space:pre;right:703.40px;transform-origin:100% 50%;transform:scaleX(0.9800);">218,38</span>
<div style="left:51.50px;top:195.65px;width:68.70px;height:0.80px;background:#3a3f45;"></div>
<span id="t114" style="top:197.27px;font-size:7.0px;line-height:8.40px;color:#1c1c1c;white-space:pre;left:52.50px;transform-origin:0 50%;transform:scaleX(0.9800);">Italy</span>
<span id="t115" style="top:197.27px;font-size:7.0px;line-height:8.40px;color:#1c1c1c;white-space:pre;right:806.00px;transform-origin:100% 50%;transform:scaleX(0.9800);">55.809,89</span>
<span id="t116" style="top:197.27px;font-size:7.0px;line-height:8.40px;color:#1c1c1c;white-space:pre;right:703.40px;transform-origin:100% 50%;transform:scaleX(0.9800);">298,82</span>
<span id="t117" style="top:197.27px;font-size:7.0px;line-height:8.40px;color:#1c1c1c;white-space:pre;right:603.10px;transform-origin:100% 50%;transform:scaleX(0.9800);">1.070.833,53</span>
<div style="left:51.50px;top:204.69px;width:68.70px;height:0.80px;background:#3a3f45;"></div>
<span id="t118" style="top:206.32px;font-size:7.0px;line-height:8.40px;color:#1c1c1c;white-space:pre;left:52.50px;transform-origin:0 50%;transform:scaleX(0.9800);">Germany</span>
<span id="t119" style="top:206.32px;font-size:7.0px;line-height:8.40px;color:#1c1c1c;white-space:pre;right:806.00px;transform-origin:100% 50%;transform:scaleX(0.9800);">28.260,96</span>
<div style="left:51.50px;top:213.74px;width:68.70px;height:0.80px;background:#3a3f45;"></div>
<span id="t120" style="top:215.36px;font-size:7.0px;line-height:8.40px;color:#1c1c1c;white-space:pre;left:52.50px;transform-origin:0 50%;transform:scaleX(0.9800);">France</span>
<span id="t121" style="top:215.36px;font-size:7.0px;line-height:8.40px;color:#1c1c1c;white-space:pre;right:806.00px;transform-origin:100% 50%;transform:scaleX(0.9800);">38.298,30</span>
<span id="t122" style="top:215.36px;font-size:7.0px;line-height:8.40px;color:#1c1c1c;white-space:pre;right:603.10px;transform-origin:100% 50%;transform:scaleX(0.9800);">15.345,23</span>
<div style="left:51.50px;top:222.78px;width:68.70px;height:0.80px;background:#3a3f45;"></div>
<span id="t123" style="top:224.41px;font-size:7.0px;line-height:8.40px;color:#1c1c1c;white-space:pre;left:52.50px;transform-origin:0 50%;transform:scaleX(0.9800);">Denmark</span>
<span id="t124" style="top:224.41px;font-size:7.0px;line-height:8.40px;color:#1c1c1c;white-space:pre;right:806.00px;transform-origin:100% 50%;transform:scaleX(0.9800);">1.254,98</span>
<div style="left:51.50px;top:231.83px;width:68.70px;height:0.80px;background:#3a3f45;"></div>
<span id="t125" style="top:233.45px;font-size:7.0px;line-height:8.40px;color:#1c1c1c;white-space:pre;left:52.50px;transform-origin:0 50%;transform:scaleX(0.9800);">Cyprus</span>
<span id="t126" style="top:233.45px;font-size:7.0px;line-height:8.40px;color:#1c1c1c;white-space:pre;right:806.00px;transform-origin:100% 50%;transform:scaleX(0.9800);">376,76</span>
<span id="t127" style="top:233.45px;font-size:7.0px;line-height:8.40px;color:#1c1c1c;white-space:pre;right:603.10px;transform-origin:100% 50%;transform:scaleX(0.9800);">10.790,35</span>
<div style="left:51.50px;top:240.88px;width:68.70px;height:0.80px;background:#3a3f45;"></div>
<span id="t128" style="top:242.50px;font-size:7.0px;line-height:8.40px;color:#1c1c1c;white-space:pre;left:52.50px;transform-origin:0 50%;transform:scaleX(0.9800);">Belgium</span>
<span id="t129" style="top:242.50px;font-size:7.0px;line-height:8.40px;color:#1c1c1c;white-space:pre;right:806.00px;transform-origin:100% 50%;transform:scaleX(0.9800);">5.788,59</span>
<span id="t130" style="top:242.50px;font-size:7.0px;line-height:8.40px;color:#1c1c1c;white-space:pre;right:703.40px;transform-origin:100% 50%;transform:scaleX(0.9800);">2.795,63</span>
<div style="left:51.50px;top:249.92px;width:68.70px;height:0.80px;background:#3a3f45;"></div>
<span id="t131" style="top:251.54px;font-size:7.0px;line-height:8.40px;color:#1c1c1c;white-space:pre;left:52.50px;transform-origin:0 50%;transform:scaleX(0.9800);">Austria</span>
<span id="t132" style="top:251.54px;font-size:7.0px;line-height:8.40px;color:#1c1c1c;white-space:pre;right:806.00px;transform-origin:100% 50%;transform:scaleX(0.9800);">7.674,63</span>
<span id="t133" style="top:251.54px;font-size:7.0px;line-height:8.40px;color:#1c1c1c;white-space:pre;right:703.40px;transform-origin:100% 50%;transform:scaleX(0.9800);">716,34</span>
<div style="left:51.50px;top:258.97px;width:68.70px;height:0.80px;background:#3a3f45;"></div>
<span id="t134" style="top:260.59px;font-size:7.0px;line-height:8.40px;color:#1c1c1c;white-space:pre;font-weight:bold;left:52.50px;transform-origin:0 50%;transform:scaleX(0.9800);">Total Result</span>
<span id="t135" style="top:260.59px;font-size:7.0px;line-height:8.40px;color:#1c1c1c;white-space:pre;font-weight:bold;right:806.00px;transform-origin:100% 50%;transform:scaleX(0.9800);">209.966,30</span>
<span id="t136" style="top:260.59px;font-size:7.0px;line-height:8.40px;color:#1c1c1c;white-space:pre;font-weight:bold;right:703.40px;transform-origin:100% 50%;transform:scaleX(0.9800);">16.455,61</span>
<span id="t137" style="top:260.59px;font-size:7.0px;line-height:8.40px;color:#1c1c1c;white-space:pre;font-weight:bold;right:603.10px;transform-origin:100% 50%;transform:scaleX(0.9800);">3.903.170,36</span>
<div style="left:50.90px;top:132.08px;width:371.20px;height:1.30px;background:#2a2a2a;"></div>
<div style="left:50.90px;top:267.71px;width:371.20px;height:1.40px;background:#2a2a2a;"></div>
<div style="left:51.50px;top:141.28px;width:370.00px;height:1.00px;background:#2a2a2a;"></div>
<div style="left:51.50px;top:150.32px;width:370.00px;height:1.00px;background:#2a2a2a;"></div>
<div style="left:51.50px;top:258.87px;width:370.00px;height:1.00px;background:#2a2a2a;"></div>
<div style="left:50.85px;top:132.73px;width:1.30px;height:135.67px;background:#2a2a2a;"></div>
<div style="left:420.80px;top:132.73px;width:1.40px;height:135.67px;background:#2a2a2a;"></div>
<div style="left:119.70px;top:132.73px;width:1.00px;height:135.67px;background:#2a2a2a;"></div>
<div style="left:218.10px;top:132.73px;width:1.00px;height:135.67px;background:#2a2a2a;"></div>
<div style="left:320.70px;top:141.78px;width:1.00px;height:126.63px;background:#2a2a2a;"></div>
<div style="left:218.00px;top:358.26px;width:103.80px;height:10.24px;border:1.2px solid #111;"></div>
<div style="left:319.70px;top:366.40px;width:2.60px;height:2.60px;background:#111;"></div>
<div style="left:464.30px;top:129.30px;width:314.30px;height:325.00px;background:#b4c7dc;border:1.8px solid #1c1c1c;"></div>
<div style="left:467.80px;top:132.80px;width:77.70px;height:14.10px;background:#e6e6e6;"></div>
<span id="t138" class="sf" style="top:135.70px;font-size:7.0px;line-height:8.40px;color:#111;white-space:pre;left:469.80px;transform-origin:0 50%;transform:scaleX(0.9650);">Size | - all -</span>
<svg style="left:538.20px;top:137.80px" width="4.8" height="3.6" viewBox="0 0 4.8 3.6"><path d="M0 0H4.8L2.4 3.6Z" fill="#111"/></svg>
<span id="t139" style="top:161.08px;font-size:9.2px;line-height:11.04px;color:#111;white-space:pre;left:621.50px;transform:translateX(-50%) scaleX(0.9529);">Pivot Chart - Orchards in Europe</span>
<span id="t140" style="top:182.22px;font-size:7.8px;line-height:9.36px;color:#111;white-space:pre;left:621.00px;transform:translateX(-50%) scaleX(0.9779);">Apples, Pear, Apricot, Peaches and Olive Trees</span>
<div style="left:523.20px;top:199.90px;width:1.00px;height:217.00px;background:#b9bec5;"></div>
<div style="left:550.06px;top:199.90px;width:1.00px;height:217.00px;background:#c2c9d0;"></div>
<div style="left:576.92px;top:199.90px;width:1.00px;height:217.00px;background:#c2c9d0;"></div>
<div style="left:603.78px;top:199.90px;width:1.00px;height:217.00px;background:#c2c9d0;"></div>
<div style="left:630.64px;top:199.90px;width:1.00px;height:217.00px;background:#c2c9d0;"></div>
<div style="left:657.50px;top:199.90px;width:1.00px;height:217.00px;background:#c2c9d0;"></div>
<div style="left:522.20px;top:414.90px;width:135.80px;height:1.00px;background:#b9bec5;"></div>
<div style="left:522.20px;top:199.40px;width:1.50px;height:1.00px;background:#b9bec5;"></div>
<div style="left:524.10px;top:204.38px;width:122.83px;height:9.10px;background:#004586;"></div>
<div style="left:646.93px;top:204.38px;width:11.47px;height:9.10px;background:#ff420e;"></div>
<span id="t141" style="top:205.33px;font-size:7.0px;line-height:8.40px;color:#111;white-space:pre;right:505.10px;transform-origin:100% 50%;transform:scaleX(0.9550);">Austria</span>
<div style="left:522.20px;top:217.36px;width:1.50px;height:1.00px;background:#b9bec5;"></div>
<div style="left:524.10px;top:222.34px;width:90.56px;height:9.10px;background:#004586;"></div>
<div style="left:614.66px;top:222.34px;width:43.74px;height:9.10px;background:#ff420e;"></div>
<span id="t142" style="top:223.29px;font-size:7.0px;line-height:8.40px;color:#111;white-space:pre;right:505.10px;transform-origin:100% 50%;transform:scaleX(0.9550);">Belgium</span>
<div style="left:522.20px;top:235.32px;width:1.50px;height:1.00px;background:#b9bec5;"></div>
<div style="left:524.10px;top:240.30px;width:4.53px;height:9.10px;background:#004586;"></div>
<div style="left:528.63px;top:240.30px;width:129.77px;height:9.10px;background:#ffd320;"></div>
<span id="t143" style="top:241.25px;font-size:7.0px;line-height:8.40px;color:#111;white-space:pre;right:505.10px;transform-origin:100% 50%;transform:scaleX(0.9550);">Cyprus</span>
<div style="left:522.20px;top:253.28px;width:1.50px;height:1.00px;background:#b9bec5;"></div>
<div style="left:524.10px;top:258.25px;width:134.30px;height:9.10px;background:#004586;"></div>
<span id="t144" style="top:259.20px;font-size:7.0px;line-height:8.40px;color:#111;white-space:pre;right:505.10px;transform-origin:100% 50%;transform:scaleX(0.9550);">Denmark</span>
<div style="left:522.20px;top:271.23px;width:1.50px;height:1.00px;background:#b9bec5;"></div>
<div style="left:524.10px;top:276.21px;width:95.88px;height:9.10px;background:#004586;"></div>
<div style="left:619.98px;top:276.21px;width:38.42px;height:9.10px;background:#ffd320;"></div>
<span id="t145" style="top:277.16px;font-size:7.0px;line-height:8.40px;color:#111;white-space:pre;right:505.10px;transform-origin:100% 50%;transform:scaleX(0.9550);">France</span>
<div style="left:522.20px;top:289.19px;width:1.50px;height:1.00px;background:#b9bec5;"></div>
<div style="left:524.10px;top:294.17px;width:134.30px;height:9.10px;background:#004586;"></div>
<span id="t146" style="top:295.12px;font-size:7.0px;line-height:8.40px;color:#111;white-space:pre;right:505.10px;transform-origin:100% 50%;transform:scaleX(0.9550);">Germany</span>
<div style="left:522.20px;top:307.15px;width:1.50px;height:1.00px;background:#b9bec5;"></div>
<div style="left:524.10px;top:312.13px;width:6.65px;height:9.10px;background:#004586;"></div>
<div style="left:530.75px;top:312.13px;width:0.50px;height:9.10px;background:#ff420e;"></div>
<div style="left:530.79px;top:312.13px;width:127.61px;height:9.10px;background:#ffd320;"></div>
<span id="t147" style="top:313.08px;font-size:7.0px;line-height:8.40px;color:#111;white-space:pre;right:505.10px;transform-origin:100% 50%;transform:scaleX(0.9550);">Italy</span>
<div style="left:522.20px;top:325.11px;width:1.50px;height:1.00px;background:#b9bec5;"></div>
<div style="left:524.10px;top:330.09px;width:130.21px;height:9.10px;background:#004586;"></div>
<div style="left:654.31px;top:330.09px;width:4.09px;height:9.10px;background:#ff420e;"></div>
<span id="t148" style="top:331.04px;font-size:7.0px;line-height:8.40px;color:#111;white-space:pre;right:505.10px;transform-origin:100% 50%;transform:scaleX(0.9550);">Netherlands</span>
<div style="left:522.20px;top:343.07px;width:1.50px;height:1.00px;background:#b9bec5;"></div>
<div style="left:524.10px;top:348.05px;width:4.84px;height:9.10px;background:#004586;"></div>
<div style="left:528.94px;top:348.05px;width:0.79px;height:9.10px;background:#ff420e;"></div>
<div style="left:529.73px;top:348.05px;width:128.67px;height:9.10px;background:#ffd320;"></div>
<span id="t149" style="top:349.00px;font-size:7.0px;line-height:8.40px;color:#111;white-space:pre;right:505.10px;transform-origin:100% 50%;transform:scaleX(0.9550);">Portugal</span>
<div style="left:522.20px;top:361.02px;width:1.50px;height:1.00px;background:#b9bec5;"></div>
<div style="left:524.10px;top:366.00px;width:134.30px;height:9.10px;background:#004586;"></div>
<span id="t150" style="top:366.95px;font-size:7.0px;line-height:8.40px;color:#111;white-space:pre;right:505.10px;transform-origin:100% 50%;transform:scaleX(0.9550);">Serbia</span>
<div style="left:522.20px;top:378.98px;width:1.50px;height:1.00px;background:#b9bec5;"></div>
<div style="left:524.10px;top:383.96px;width:1.23px;height:9.10px;background:#004586;"></div>
<div style="left:525.33px;top:383.96px;width:0.56px;height:9.10px;background:#ff420e;"></div>
<div style="left:525.89px;top:383.96px;width:132.51px;height:9.10px;background:#ffd320;"></div>
<span id="t151" style="top:384.91px;font-size:7.0px;line-height:8.40px;color:#111;white-space:pre;right:505.10px;transform-origin:100% 50%;transform:scaleX(0.9550);">Spain</span>
<div style="left:522.20px;top:396.94px;width:1.50px;height:1.00px;background:#b9bec5;"></div>
<div style="left:524.10px;top:401.92px;width:134.30px;height:9.10px;background:#004586;"></div>
<span id="t152" style="top:402.87px;font-size:7.0px;line-height:8.40px;color:#111;white-space:pre;right:505.10px;transform-origin:100% 50%;transform:scaleX(0.9550);">United Kingdom</span>
<span id="t153" style="top:420.70px;font-size:7.0px;line-height:8.40px;color:#111;white-space:pre;left:524.50px;transform:translateX(-50%);">0 %</span>
<span id="t154" style="top:420.70px;font-size:7.0px;line-height:8.40px;color:#111;white-space:pre;left:551.36px;transform:translateX(-50%);">20 %</span>
<span id="t155" style="top:420.70px;font-size:7.0px;line-height:8.40px;color:#111;white-space:pre;left:578.22px;transform:translateX(-50%);">40 %</span>
<span id="t156" style="top:420.70px;font-size:7.0px;line-height:8.40px;color:#111;white-space:pre;left:605.08px;transform:translateX(-50%);">60 %</span>
<span id="t157" style="top:420.70px;font-size:7.0px;line-height:8.40px;color:#111;white-space:pre;left:631.94px;transform:translateX(-50%);">80 %</span>
<span id="t158" style="top:420.70px;font-size:7.0px;line-height:8.40px;color:#111;white-space:pre;left:658.80px;transform:translateX(-50%);">100 %</span>
<div style="left:471.70px;top:436.60px;width:58.30px;height:14.10px;background:#e6e6e6;"></div>
<span id="t159" class="sf" style="top:439.60px;font-size:7.0px;line-height:8.40px;color:#111;white-space:pre;left:474.00px;transform-origin:0 50%;transform:scaleX(0.9846);">Country</span>
<svg style="left:522.40px;top:441.60px" width="4.8" height="3.6" viewBox="0 0 4.8 3.6"><path d="M0 0H4.8L2.4 3.6Z" fill="#0000ee"/></svg>
<div style="left:675.50px;top:238.60px;width:95.40px;height:14.00px;background:#f4f4f4;"></div>
<span id="t160" class="sf" style="top:241.70px;font-size:7.0px;line-height:8.40px;color:#222;white-space:pre;left:677.80px;transform-origin:0 50%;transform:scaleX(0.9381);">Data</span>
<div style="left:676.30px;top:260.30px;width:4.00px;height:4.00px;background:#004586;"></div>
<span id="t161" style="top:258.86px;font-size:6.9px;line-height:8.28px;color:#111;white-space:pre;left:682.60px;transform-origin:0 50%;transform:scaleX(0.9916);">Som - Apple &amp; Pear Trees</span>
<div style="left:676.30px;top:270.50px;width:4.00px;height:4.00px;background:#ff420e;"></div>
<span id="t162" style="top:269.06px;font-size:6.9px;line-height:8.28px;color:#111;white-space:pre;left:682.60px;transform-origin:0 50%;transform:scaleX(0.9981);">Som - Peach &amp; Apricot Trees</span>
<div style="left:676.30px;top:280.70px;width:4.00px;height:4.00px;background:#ffd320;"></div>
<span id="t163" style="top:279.26px;font-size:6.9px;line-height:8.28px;color:#111;white-space:pre;left:682.60px;transform-origin:0 50%;transform:scaleX(0.9884);">Som - Olive Trees</span>
<div style="left:832.30px;top:76.00px;width:1.00px;height:472.80px;background:#d6d2ce;"></div>
<div style="left:835.60px;top:76.00px;width:1.00px;height:472.80px;background:#d6d2ce;"></div>
<div style="left:832.30px;top:76.00px;width:192.00px;height:1.00px;background:#dcd8d4;"></div>
<div style="left:831.80px;top:293.00px;width:3.60px;height:38.30px;background:#7d8081;"></div>
<svg style="left:832.60px;top:310.80px" width="2.2" height="3" viewBox="0 0 2.2 3"><path d="M0 0L2.2 1.5L0 3Z" fill="#fff"/></svg>
<div style="left:838.70px;top:77.00px;width:163.00px;height:469.00px;background:#f6f5f4;border-left:1px solid #e4e1de;border-right:1px solid #e4e1de;border-bottom:1px solid #e4e1de;"></div>
<div style="left:841.30px;top:81.50px;width:1.00px;height:1.00px;background:#aaa7a4;"></div>
<div style="left:841.30px;top:83.50px;width:1.00px;height:1.00px;background:#aaa7a4;"></div>
<div style="left:841.30px;top:85.50px;width:1.00px;height:1.00px;background:#aaa7a4;"></div>
<div style="left:841.30px;top:87.50px;width:1.00px;height:1.00px;background:#aaa7a4;"></div>
<div style="left:841.30px;top:89.50px;width:1.00px;height:1.00px;background:#aaa7a4;"></div>
<span id="t164" style="top:81.14px;font-size:8.6px;line-height:10.32px;color:#2e3436;white-space:pre;font-weight:bold;left:852.00px;transform-origin:0 50%;transform:scaleX(0.8844);">Properties</span>
<span id="t165" style="top:82.00px;font-size:8px;line-height:9.60px;color:#2e3436;white-space:pre;left:997.00px;transform:translateX(-50%);">×</span>
<div style="left:839.20px;top:93.00px;width:162.00px;height:14.00px;background:linear-gradient(#e9e7e5,#f4f3f2);"></div>
<svg style="left:841.40px;top:97.50px" width="4.4" height="4.4" viewBox="0 0 4.4 4.4"><circle cx="2.2" cy="2.2" r="1.9" fill="#e8e6e4" stroke="#8d8f90" stroke-width="0.6"/><path d="M1.1 2.2H3.3" stroke="#6b6e6f" stroke-width="0.6"/></svg>
<span id="t166" style="top:95.04px;font-size:8.6px;line-height:10.32px;color:#2e3436;white-space:pre;font-weight:bold;left:849.00px;transform-origin:0 50%;transform:scaleX(0.9247);">Style</span>
<div style="left:839.20px;top:132.30px;width:162.00px;height:14.10px;background:linear-gradient(#e9e7e5,#f4f3f2);"></div>
<svg style="left:841.40px;top:136.85px" width="4.4" height="4.4" viewBox="0 0 4.4 4.4"><circle cx="2.2" cy="2.2" r="1.9" fill="#e8e6e4" stroke="#8d8f90" stroke-width="0.6"/><path d="M1.1 2.2H3.3" stroke="#6b6e6f" stroke-width="0.6"/></svg>
<span id="t167" style="top:134.39px;font-size:8.6px;line-height:10.32px;color:#2e3436;white-space:pre;font-weight:bold;left:849.00px;transform-origin:0 50%;transform:scaleX(0.8972);">Character</span>
<svg style="left:993.60px;top:137.65px" width="5.2" height="5.2" viewBox="0 0 5.2 5.2"><circle cx="2.6" cy="2.6" r="2.4" fill="#d5d3d1" stroke="#c2c0be" stroke-width="0.5"/></svg>
<div style="left:839.20px;top:220.70px;width:162.00px;height:13.80px;background:linear-gradient(#e9e7e5,#f4f3f2);"></div>
<svg style="left:841.40px;top:225.10px" width="4.4" height="4.4" viewBox="0 0 4.4 4.4"><circle cx="2.2" cy="2.2" r="1.9" fill="#e8e6e4" stroke="#8d8f90" stroke-width="0.6"/><path d="M1.1 2.2H3.3" stroke="#6b6e6f" stroke-width="0.6"/></svg>
<span id="t168" style="top:222.64px;font-size:8.6px;line-height:10.32px;color:#2e3436;white-space:pre;font-weight:bold;left:849.00px;transform-origin:0 50%;transform:scaleX(0.9143);">Number Format</span>
<svg style="left:993.60px;top:225.90px" width="5.2" height="5.2" viewBox="0 0 5.2 5.2"><circle cx="2.6" cy="2.6" r="2.4" fill="#d5d3d1" stroke="#c2c0be" stroke-width="0.5"/></svg>
<div style="left:839.20px;top:322.50px;width:162.00px;height:14.50px;background:linear-gradient(#e9e7e5,#f4f3f2);"></div>
<svg style="left:841.40px;top:327.25px" width="4.4" height="4.4" viewBox="0 0 4.4 4.4"><circle cx="2.2" cy="2.2" r="1.9" fill="#e8e6e4" stroke="#8d8f90" stroke-width="0.6"/><path d="M1.1 2.2H3.3" stroke="#6b6e6f" stroke-width="0.6"/></svg>
<span id="t169" style="top:324.79px;font-size:8.6px;line-height:10.32px;color:#2e3436;white-space:pre;font-weight:bold;left:849.00px;transform-origin:0 50%;transform:scaleX(0.9044);">Alignment</span>
<svg style="left:993.60px;top:328.05px" width="5.2" height="5.2" viewBox="0 0 5.2 5.2"><circle cx="2.6" cy="2.6" r="2.4" fill="#d5d3d1" stroke="#c2c0be" stroke-width="0.5"/></svg>
<div style="left:839.20px;top:446.70px;width:162.00px;height:14.10px;background:linear-gradient(#e9e7e5,#f4f3f2);"></div>
<svg style="left:841.40px;top:451.25px" width="4.4" height="4.4" viewBox="0 0 4.4 4.4"><circle cx="2.2" cy="2.2" r="1.9" fill="#e8e6e4" stroke="#8d8f90" stroke-width="0.6"/><path d="M1.1 2.2H3.3" stroke="#6b6e6f" stroke-width="0.6"/></svg>
<span id="t170" style="top:448.79px;font-size:8.6px;line-height:10.32px;color:#2e3436;white-space:pre;font-weight:bold;left:849.00px;transform-origin:0 50%;transform:scaleX(0.8802);">Cell Appearance</span>
<svg style="left:993.60px;top:452.05px" width="5.2" height="5.2" viewBox="0 0 5.2 5.2"><circle cx="2.6" cy="2.6" r="2.4" fill="#d5d3d1" stroke="#c2c0be" stroke-width="0.5"/></svg>
<div style="left:842.00px;top:110.60px;width:126.40px;height:17.20px;background:#ffffff;border:1px solid #cdc7c2;border-radius:2.5px;"></div>
<div style="left:950.00px;top:110.60px;width:18.40px;height:17.20px;background:linear-gradient(#f7f6f5,#eceae8);border:1px solid #cdc7c2;border-radius:0 2.5px 2.5px 0;"></div>
<span id="t171" style="top:114.64px;font-size:8.6px;line-height:10.32px;color:#2e3436;white-space:pre;left:847.90px;transform-origin:0 50%;transform:scaleX(1.0107);">Default</span>
<svg style="left:957.10px;top:118.30px" width="4.2" height="2.4" viewBox="0 0 4.2 2.4"><path d="M0 0H4.2L2.1 2.4Z" fill="#2e3436"/></svg>
<div style="left:842.00px;top:149.70px;width:108.20px;height:17.30px;background:#ffffff;border:1px solid #cdc7c2;border-radius:2.5px;"></div>
<div style="left:933.00px;top:149.70px;width:17.20px;height:17.30px;background:linear-gradient(#f7f6f5,#eceae8);border:1px solid #cdc7c2;border-radius:0 2.5px 2.5px 0;"></div>
<span id="t172" style="top:153.79px;font-size:8.6px;line-height:10.32px;color:#2e3436;white-space:pre;font-style:italic;left:847.80px;transform-origin:0 50%;transform:scaleX(1.0876);">Arial</span>
<svg style="left:939.50px;top:157.45px" width="4.2" height="2.4" viewBox="0 0 4.2 2.4"><path d="M0 0H4.2L2.1 2.4Z" fill="#2e3436"/></svg>
<div style="left:954.70px;top:149.70px;width:43.30px;height:17.30px;background:#ffffff;border:1px solid #cdc7c2;border-radius:2.5px;"></div>
<div style="left:980.00px;top:149.70px;width:18.00px;height:17.30px;background:linear-gradient(#f7f6f5,#eceae8);border:1px solid #cdc7c2;border-radius:0 2.5px 2.5px 0;"></div>
<span id="t173" style="top:153.79px;font-size:8.6px;line-height:10.32px;color:#2e3436;white-space:pre;left:960.00px;transform-origin:0 50%;transform:scaleX(0.9300);">10</span>
<svg style="left:986.90px;top:157.45px" width="4.2" height="2.4" viewBox="0 0 4.2 2.4"><path d="M0 0H4.2L2.1 2.4Z" fill="#2e3436"/></svg>
<span id="t174" style="top:177.44px;font-size:8.6px;line-height:10.32px;color:#303436;white-space:pre;font-weight:bold;left:848.00px;transform:translateX(-50%);-webkit-text-stroke:0.3px #303436;">B</span>
<span id="t175" class="sf" style="top:177.44px;font-size:8.6px;line-height:10.32px;color:#303436;white-space:pre;font-style:italic;left:862.00px;transform:translateX(-50%);font-weight:bold;">I</span>
<span id="t176" style="top:177.16px;font-size:8.4px;line-height:10.08px;color:#303436;white-space:pre;font-weight:bold;left:874.50px;transform:translateX(-50%) scaleX(0.9200);">U</span>
<div style="left:870.80px;top:186.20px;width:7.40px;height:1.00px;background:#303436;"></div>
<svg style="left:882.62px;top:182.50px" width="3.1500000000000004" height="1.7999999999999998" viewBox="0 0 3.1500000000000004 1.7999999999999998"><path d="M0 0H3.1500000000000004L1.5750000000000002 1.7999999999999998Z" fill="#2e3436"/></svg>
<span id="t177" style="top:177.56px;font-size:8.4px;line-height:10.08px;color:#4a4e50;white-space:pre;font-weight:bold;left:894.50px;transform:translateX(-50%);text-decoration:line-through;-webkit-text-stroke:0.25px #4a4e50;">S</span>
<span id="t178" style="top:177.20px;font-size:9px;line-height:10.80px;color:#303436;white-space:pre;font-weight:bold;left:907.50px;transform:translateX(-50%);text-shadow:0.8px 0.8px 0.5px #999;">A</span>
<span id="t179" style="top:178.04px;font-size:8.6px;line-height:10.32px;color:#303436;white-space:pre;font-weight:bold;left:977.60px;transform:translateX(-50%);-webkit-text-stroke:0.3px #303436;">A</span>
<svg style="left:979.60px;top:178.20px" width="3" height="2" viewBox="0 0 3 2"><path d="M0 2L1.5 0L3 2Z" fill="#3a87e0"/></svg>
<span id="t180" style="top:179.04px;font-size:7.6px;line-height:9.12px;color:#303436;white-space:pre;font-weight:bold;left:990.20px;transform:translateX(-50%);-webkit-text-stroke:0.3px #303436;">A</span>
<svg style="left:992.40px;top:178.60px" width="3" height="2" viewBox="0 0 3 2"><path d="M0 0L1.5 2L3 0Z" fill="#a45ce0"/></svg>
<span id="t181" style="top:200.32px;font-size:8.8px;line-height:10.56px;color:#303436;white-space:pre;font-weight:bold;left:847.50px;transform:translateX(-50%);-webkit-text-stroke:0.3px #303436;">A</span>
<div style="left:843.40px;top:209.60px;width:8.60px;height:1.50px;background:#d81e1e;"></div>
<svg style="left:856.22px;top:206.50px" width="3.1500000000000004" height="1.7999999999999998" viewBox="0 0 3.1500000000000004 1.7999999999999998"><path d="M0 0H3.1500000000000004L1.5750000000000002 1.7999999999999998Z" fill="#2e3436"/></svg>
<span id="t182" style="top:201.24px;font-size:8.6px;line-height:10.32px;color:#303436;white-space:pre;font-weight:bold;font-style:italic;left:873.80px;transform:translateX(-50%);">A</span>
<svg style="left:875.40px;top:206.40px" width="5" height="4.4" viewBox="0 0 5 4.4"><path d="M1.4 0L5 1L3.8 4.4L0 3.2Z" fill="#ee82bd"/></svg>
<span id="t183" style="top:201.76px;font-size:7.4px;line-height:8.88px;color:#303436;white-space:pre;font-weight:bold;left:952.20px;transform:translateX(-50%);">ab</span>
<svg style="left:948.20px;top:207.60px" width="8" height="2.6" viewBox="0 0 8 2.6"><path d="M0 0.2L1.6 2.4L1.6 0.2ZM8 0.2L6.4 2.4L6.4 0.2Z" fill="#ef7f1a"/></svg>
<svg style="left:960.42px;top:206.50px" width="3.1500000000000004" height="1.7999999999999998" viewBox="0 0 3.1500000000000004 1.7999999999999998"><path d="M0 0H3.1500000000000004L1.5750000000000002 1.7999999999999998Z" fill="#2e3436"/></svg>
<span id="t184" style="top:202.04px;font-size:8.6px;line-height:10.32px;color:#303436;white-space:pre;font-weight:bold;left:977.80px;transform:translateX(-50%);-webkit-text-stroke:0.3px #303436;">A</span>
<span id="t185" style="top:201.20px;font-size:5px;line-height:6.00px;color:#ef7f1a;white-space:pre;font-weight:bold;left:982.00px;transform:translateX(-50%);">2</span>
<span id="t186" style="top:201.04px;font-size:8.6px;line-height:10.32px;color:#303436;white-space:pre;font-weight:bold;left:990.80px;transform:translateX(-50%);-webkit-text-stroke:0.3px #303436;">A</span>
<span id="t187" style="top:206.20px;font-size:5px;line-height:6.00px;color:#ef7f1a;white-space:pre;font-weight:bold;left:995.20px;transform:translateX(-50%);">2</span>
<div style="left:842.00px;top:237.40px;width:107.20px;height:17.60px;background:linear-gradient(#f4f3f2,#e9e7e5);border:1px solid #cdc7c2;border-radius:2.5px;"></div>
<span id="t188" style="top:241.24px;font-size:8.6px;line-height:10.32px;color:#2e3436;white-space:pre;left:847.60px;transform-origin:0 50%;transform:scaleX(0.9320);">General</span>
<svg style="left:938.30px;top:245.40px" width="4.2" height="2.4" viewBox="0 0 4.2 2.4"><path d="M0 0H4.2L2.1 2.4Z" fill="#2e3436"/></svg>
<span id="t189" style="top:241.40px;font-size:8px;line-height:9.60px;color:#303436;white-space:pre;font-weight:bold;left:978.60px;transform:translateX(-50%);-webkit-text-stroke:0.3px #303436;">%</span>
<span id="t190" style="top:241.14px;font-size:8.6px;line-height:10.32px;color:#303436;white-space:pre;font-weight:bold;left:992.00px;transform:translateX(-50%) scaleX(0.8000);-webkit-text-stroke:0.3px #303436;">7.4</span>
<svg style="left:966.82px;top:245.70px" width="3.1500000000000004" height="1.7999999999999998" viewBox="0 0 3.1500000000000004 1.7999999999999998"><path d="M0 0H3.1500000000000004L1.5750000000000002 1.7999999999999998Z" fill="#2e3436"/></svg>
<span id="t191" style="top:258.64px;font-size:8.6px;line-height:10.32px;color:#2e3436;white-space:pre;left:843.60px;transform-origin:0 50%;transform:scaleX(0.9183);">Decimal places:</span>
<span id="t192" style="top:258.64px;font-size:8.6px;line-height:10.32px;color:#2e3436;white-space:pre;left:939.50px;transform-origin:0 50%;transform:scaleX(0.9206);">Leading zeroes:</span>
<div style="left:842.00px;top:271.60px;width:58.30px;height:17.60px;background:#ffffff;border:1px solid #cdc7c2;border-radius:2.5px;"></div>
<div style="left:864.00px;top:272.10px;width:1.00px;height:16.60px;background:#e3dfdb;"></div>
<div style="left:882.30px;top:272.10px;width:1.00px;height:16.60px;background:#e3dfdb;"></div>
<div style="left:871.05px;top:279.90px;width:5.20px;height:1.10px;background:#2e3436;"></div>
<div style="left:889.00px;top:279.90px;width:5.20px;height:1.10px;background:#2e3436;"></div>
<div style="left:891.05px;top:277.80px;width:1.10px;height:5.20px;background:#2e3436;"></div>
<div style="left:939.50px;top:271.60px;width:58.70px;height:17.60px;background:#ffffff;border:1px solid #cdc7c2;border-radius:2.5px;"></div>
<div style="left:961.40px;top:272.10px;width:1.00px;height:16.60px;background:#e3dfdb;"></div>
<div style="left:980.00px;top:272.10px;width:1.00px;height:16.60px;background:#e3dfdb;"></div>
<div style="left:968.60px;top:279.90px;width:5.20px;height:1.10px;background:#2e3436;"></div>
<div style="left:986.80px;top:279.90px;width:5.20px;height:1.10px;background:#2e3436;"></div>
<div style="left:988.85px;top:277.80px;width:1.10px;height:5.20px;background:#2e3436;"></div>
<span id="t193" style="top:275.66px;font-size:8.4px;line-height:10.08px;color:#2e3436;white-space:pre;left:941.10px;transform-origin:0 50%;transform:scaleX(0.9000);">1</span>
<div style="left:843.60px;top:294.60px;width:8.30px;height:8.30px;background:#ffffff;border:1px solid #cdc7c2;border-radius:1.6px;"></div>
<span id="t194" style="top:293.84px;font-size:8.6px;line-height:10.32px;color:#2e3436;white-space:pre;left:855.90px;transform-origin:0 50%;transform:scaleX(0.9389);">Negative numbers in red</span>
<div style="left:843.60px;top:309.30px;width:8.30px;height:8.30px;background:#ffffff;border:1px solid #cdc7c2;border-radius:1.6px;"></div>
<span id="t195" style="top:308.34px;font-size:8.6px;line-height:10.32px;color:#2e3436;white-space:pre;left:855.90px;transform-origin:0 50%;transform:scaleX(0.9247);">Thousands separator</span>
<svg style="left:844.50px;top:345.10px" width="8" height="7" viewBox="0 0 8 7"><rect x="0" y="0" width="8" height="0.9" fill="#84888a"/><rect x="0" y="2" width="5.5" height="0.9" fill="#84888a"/><rect x="0" y="4" width="8" height="0.9" fill="#84888a"/><rect x="0" y="6" width="5.5" height="0.9" fill="#84888a"/></svg>
<svg style="left:857.80px;top:345.10px" width="8" height="7" viewBox="0 0 8 7"><rect x="0" y="0" width="8" height="0.9" fill="#84888a"/><rect x="1.3" y="2" width="5.4" height="0.9" fill="#84888a"/><rect x="0" y="4" width="8" height="0.9" fill="#84888a"/><rect x="1.3" y="6" width="5.4" height="0.9" fill="#84888a"/></svg>
<svg style="left:871.30px;top:345.10px" width="8" height="7" viewBox="0 0 8 7"><rect x="0" y="0" width="8" height="0.9" fill="#84888a"/><rect x="2.5" y="2" width="5.5" height="0.9" fill="#84888a"/><rect x="0" y="4" width="8" height="0.9" fill="#84888a"/><rect x="2.5" y="6" width="5.5" height="0.9" fill="#84888a"/></svg>
<svg style="left:884.60px;top:345.10px" width="8" height="7" viewBox="0 0 8 7"><rect x="0" y="0" width="8" height="0.9" fill="#84888a"/><rect x="0" y="2" width="8" height="0.9" fill="#84888a"/><rect x="0" y="4" width="8" height="0.9" fill="#84888a"/><rect x="0" y="6" width="8" height="0.9" fill="#84888a"/></svg>
<svg style="left:964.20px;top:345.90px" width="8" height="3" viewBox="0 0 8 3"><rect x="0" y="0" width="8" height="0.9" fill="#4a4e50"/><rect x="0" y="1.7" width="5" height="0.9" fill="#4a4e50"/></svg>
<svg style="left:977.50px;top:348.30px" width="8" height="3" viewBox="0 0 8 3"><rect x="0" y="0" width="8" height="0.9" fill="#4a4e50"/><rect x="0" y="1.7" width="5" height="0.9" fill="#4a4e50"/></svg>
<div style="left:988.00px;top:341.70px;width:13.70px;height:14.10px;background:#d5d0cc;border-radius:2.5px;"></div>
<svg style="left:991.00px;top:349.50px" width="8" height="3" viewBox="0 0 8 3"><rect x="0" y="0" width="8" height="0.9" fill="#4a4e50"/><rect x="0" y="1.7" width="5" height="0.9" fill="#4a4e50"/></svg>
<span id="t196" style="top:367.64px;font-size:8.6px;line-height:10.32px;color:#9a9c9c;white-space:pre;left:842.00px;transform-origin:0 50%;transform:scaleX(0.9512);">Indent:</span>
<svg style="left:873.80px;top:369.00px" width="8" height="6" viewBox="0 0 8 6"><path d="M0 2.6H2.4V1.6L4 3L2.4 4.4V3.4H0Z" fill="#3a87e0"/><rect x="4.3" y="1" width="3.7" height="0.9" fill="#55595b"/><rect x="4.3" y="2.7" width="3.7" height="0.9" fill="#55595b"/><rect x="4.3" y="4.4" width="2.4" height="0.9" fill="#9a9c9c"/></svg>
<svg style="left:887.00px;top:369.00px" width="8" height="6" viewBox="0 0 8 6"><path d="M0 2.6H2.4V1.6L4 3L2.4 4.4V3.4H0Z" fill="#a45ce0"/><rect x="4.3" y="1" width="3.7" height="0.9" fill="#55595b"/><rect x="4.3" y="2.7" width="3.7" height="0.9" fill="#55595b"/><rect x="4.3" y="4.4" width="2.4" height="0.9" fill="#9a9c9c"/></svg>
<div style="left:947.00px;top:365.40px;width:8.30px;height:8.30px;background:#ffffff;border:1px solid #cdc7c2;border-radius:1.6px;"></div>
<span id="t197" style="top:364.44px;font-size:8.6px;line-height:10.32px;color:#8f9192;white-space:pre;left:959.40px;transform-origin:0 50%;transform:scaleX(0.9169);">Merge cells</span>
<div style="left:947.00px;top:380.20px;width:8.30px;height:8.30px;background:#ffffff;border:1px solid #cdc7c2;border-radius:1.6px;"></div>
<span id="t198" style="top:379.44px;font-size:8.6px;line-height:10.32px;color:#2e3436;white-space:pre;left:959.40px;transform-origin:0 50%;transform:scaleX(0.9420);">Wrap text</span>
<div style="left:842.00px;top:384.70px;width:82.20px;height:17.60px;background:#fbfbfa;border:1px solid #d9d5d1;border-radius:2.5px;"></div>
<div style="left:887.20px;top:385.20px;width:1.00px;height:16.60px;background:#e3dfdb;"></div>
<div style="left:906.20px;top:385.20px;width:1.00px;height:16.60px;background:#e3dfdb;"></div>
<div style="left:894.60px;top:393.00px;width:5.20px;height:1.10px;background:#b4b6b6;"></div>
<div style="left:912.90px;top:393.00px;width:5.20px;height:1.10px;background:#b4b6b6;"></div>
<div style="left:914.95px;top:390.90px;width:1.10px;height:5.20px;background:#b4b6b6;"></div>
<span id="t199" style="top:388.76px;font-size:8.4px;line-height:10.08px;color:#8f9192;white-space:pre;left:843.60px;transform-origin:0 50%;transform:scaleX(0.9000);">0 pt</span>
<span id="t200" style="top:412.34px;font-size:8.6px;line-height:10.32px;color:#2e3436;white-space:pre;left:842.00px;transform-origin:0 50%;transform:scaleX(0.9609);">Text orientation:</span>
<div style="left:907.60px;top:408.60px;width:45.60px;height:17.20px;background:#ffffff;border:1px solid #cdc7c2;border-radius:2.5px;"></div>
<div style="left:935.50px;top:408.60px;width:17.70px;height:17.20px;background:linear-gradient(#f7f6f5,#eceae8);border:1px solid #cdc7c2;border-radius:0 2.5px 2.5px 0;"></div>
<span id="t201" style="top:412.64px;font-size:8.6px;line-height:10.32px;color:#2e3436;white-space:pre;left:913.50px;transform-origin:0 50%;transform:scaleX(0.9300);">0°</span>
<svg style="left:942.25px;top:416.30px" width="4.2" height="2.4" viewBox="0 0 4.2 2.4"><path d="M0 0H4.2L2.1 2.4Z" fill="#2e3436"/></svg>
<div style="left:961.00px;top:409.20px;width:11.00px;height:15.60px;background:#ffffff;"></div>
<svg style="left:963.50px;top:414.40px" width="6" height="5" viewBox="0 0 6 5"><path d="M1.6 0.3H5.6L4.2 4.7H0.3Z" fill="none" stroke="#6b7a99" stroke-width="0.6"/><path d="M0.3 4.7H4.2" stroke="#3a87e0" stroke-width="0.9"/></svg>
<div style="left:975.30px;top:409.20px;width:11.10px;height:15.60px;background:#ffffff;"></div>
<svg style="left:977.85px;top:414.40px" width="6" height="5" viewBox="0 0 6 5"><path d="M1.6 0.3H5.6L4.2 4.7H0.3Z" fill="none" stroke="#6b7a99" stroke-width="0.6"/><path d="M1.6 0.3H5.6" stroke="#3a87e0" stroke-width="0.9"/></svg>
<div style="left:990.00px;top:409.20px;width:10.70px;height:15.60px;background:#ffffff;border:1.2px solid #3584e4;border-radius:1.5px;"></div>
<svg style="left:993.05px;top:414.40px" width="4.6" height="5" viewBox="0 0 4.6 5"><rect x="0.3" y="0.3" width="4" height="4.4" fill="none" stroke="#777" stroke-width="0.6"/></svg>
<div style="left:843.60px;top:433.30px;width:8.30px;height:8.30px;background:#ffffff;border:1px solid #cdc7c2;border-radius:1.6px;"></div>
<span id="t202" style="top:432.44px;font-size:8.6px;line-height:10.32px;color:#2e3436;white-space:pre;left:855.90px;transform-origin:0 50%;transform:scaleX(0.9276);">Vertically stacked</span>
<span id="t203" style="top:468.04px;font-size:8.6px;line-height:10.32px;color:#2e3436;white-space:pre;left:842.00px;transform-origin:0 50%;transform:scaleX(0.9323);">Background:</span>
<svg style="left:944.50px;top:468.00px" width="8" height="8.2" viewBox="0 0 8 8.2"><ellipse cx="3.6" cy="2.6" rx="2.5" ry="2.4" fill="#ececec" stroke="#6a6e70" stroke-width="0.9"/><path d="M3.2 0.6V3.2" stroke="#6a6e70" stroke-width="0.7"/><path d="M0.2 5.4Q1.6 4.2 3.2 5.4H7.2V7H0.2Z" fill="#ef7f1a"/></svg>
<div style="left:953.20px;top:469.20px;width:35.20px;height:6.50px;background:#ffffff;border:1px solid #222;border-radius:1px;"></div>
<svg style="left:993.12px;top:472.04px" width="3.3600000000000003" height="1.92" viewBox="0 0 3.3600000000000003 1.92"><path d="M0 0H3.3600000000000003L1.6800000000000002 1.92Z" fill="#222"/></svg>
<div style="left:844.20px;top:493.70px;width:22.30px;height:21.90px;background:linear-gradient(#f4f3f2,#e6e4e2);border:1px solid #bdbab7;"></div>
<div style="left:854.80px;top:494.20px;width:1.00px;height:21.00px;background:#c4c1be;"></div>
<div style="left:844.70px;top:504.20px;width:21.40px;height:1.00px;background:#c4c1be;"></div>
<svg style="left:869.92px;top:504.04px" width="3.3600000000000003" height="1.92" viewBox="0 0 3.3600000000000003 1.92"><path d="M0 0H3.3600000000000003L1.6800000000000002 1.92Z" fill="#222"/></svg>
<div style="left:945.30px;top:493.60px;width:39.20px;height:1.00px;background:#dcdad8;"></div>
<svg style="left:993.12px;top:493.64px" width="3.3600000000000003" height="1.92" viewBox="0 0 3.3600000000000003 1.92"><path d="M0 0H3.3600000000000003L1.6800000000000002 1.92Z" fill="#c9c7c5"/></svg>
<svg style="left:944.50px;top:510.40px" width="8" height="8.2" viewBox="0 0 8 8.2"><ellipse cx="3.6" cy="2.6" rx="2.5" ry="2.4" fill="#ececec" stroke="#b9b9b9" stroke-width="0.9"/><path d="M3.2 0.6V3.2" stroke="#b9b9b9" stroke-width="0.7"/><path d="M0.2 5.4Q1.6 4.2 3.2 5.4H7.2V7H0.2Z" fill="#d5d5d5"/></svg>
<div style="left:953.20px;top:511.90px;width:35.20px;height:6.20px;background:#dedcda;border:1px solid #cfcdcb;border-radius:1px;"></div>
<svg style="left:993.12px;top:514.64px" width="3.3600000000000003" height="1.92" viewBox="0 0 3.3600000000000003 1.92"><path d="M0 0H3.3600000000000003L1.6800000000000002 1.92Z" fill="#c9c7c5"/></svg>
<div style="left:839.70px;top:528.40px;width:161.00px;height:1.00px;background:#ebe9e7;"></div>
<svg style="left:1007.00px;top:80.00px" width="12" height="12" viewBox="0 0 12 12"><path d="M11.69 4.87L11.80 6.00L10.51 6.90L10.25 7.76L10.82 9.22L10.10 10.10L8.56 9.82L7.76 10.25L7.13 11.69L6.00 11.80L5.10 10.51L4.24 10.25L2.78 10.82L1.90 10.10L2.18 8.56L1.75 7.76L0.31 7.13L0.20 6.00L1.49 5.10L1.75 4.24L1.18 2.78L1.90 1.90L3.44 2.18L4.24 1.75L4.87 0.31L6.00 0.20L6.90 1.49L7.76 1.75L9.22 1.18L10.10 1.90L9.82 3.44L10.25 4.24Z" fill="#e9e7e5" stroke="#a9a6a3" stroke-width="0.7" stroke-linejoin="round"/><circle cx="6" cy="6" r="3.3" fill="#f3f2f1" stroke="#bcb9b6" stroke-width="0.6"/><circle cx="6" cy="6" r="1.7" fill="#f6f5f4" stroke="#aeaba8" stroke-width="0.7"/></svg>
<div style="left:1004.60px;top:100.00px;width:16.00px;height:14.70px;background:#fbfbfa;border:1px solid #cdc7c2;border-radius:2px;"></div>
<svg style="left:1008.00px;top:103.80px" width="10" height="8" viewBox="0 0 10 8"><rect x="0.4" y="0.4" width="9.2" height="7.2" rx="0.8" fill="#eef2f7" stroke="#8a9bb3" stroke-width="0.8"/><rect x="2" y="2.6" width="6" height="2.8" rx="1.4" fill="#3a87e0"/><circle cx="6.6" cy="4" r="1" fill="#fff"/></svg>
<span id="t204" style="top:117.20px;font-size:13px;line-height:15.60px;color:#3a3e40;white-space:pre;font-weight:bold;left:1011.20px;transform:translateX(-50%);-webkit-text-stroke:0.3px #3a3e40;">A</span>
<svg style="left:1013.60px;top:121.40px" width="6" height="9" viewBox="0 0 6 9"><path d="M5.6 0L3 4.8L1.6 4Z" fill="#c9742b"/><path d="M1.6 4L3 4.8L0.4 8.6Z" fill="#b04fc2"/></svg>
<svg style="left:1007.50px;top:139.60px" width="11" height="10.5" viewBox="0 0 11 10.5"><rect x="0.5" y="0.5" width="10" height="9.5" fill="#5aa0e6" stroke="#3b78bf" stroke-width="0.8"/><path d="M0.9 6.2Q3 4.6 5.5 6Q8 7.2 10.1 5.6V9.6H0.9Z" fill="#e9c77a"/><path d="M3.4 7.6Q5 6.4 7.4 7.6Q6 8.8 3.4 7.6Z" fill="#e27a2a"/><rect x="0.9" y="0.9" width="9.2" height="1.2" fill="#2f6bb3"/></svg>
<svg style="left:1007.50px;top:157.90px" width="11" height="11" viewBox="0 0 11 11"><circle cx="5.5" cy="5.5" r="5" fill="#3c4468" stroke="#707587" stroke-width="0.8"/><circle cx="5.5" cy="5.5" r="3.2" fill="#5b6386"/><path d="M2.6 4.2L8.6 5.6L3.6 7.4L4.6 5.6Z" fill="#f2f2f2"/><path d="M8.6 5.6L5.6 4.9L4.6 5.6Z" fill="#e24a4a"/></svg>
<span id="t205" style="top:172.80px;font-size:12px;line-height:14.40px;color:#3a3e40;white-space:pre;font-weight:bold;left:1009.60px;transform:translateX(-50%) scaleX(0.9000);">f</span>
<span id="t206" style="top:178.82px;font-size:6.8px;line-height:8.16px;color:#3a3e40;white-space:pre;font-weight:bold;left:1015.60px;transform:translateX(-50%) scaleX(0.8500);">(x)</span>
<span id="t207" style="top:113.28px;font-size:9.2px;line-height:11.04px;color:#303436;white-space:pre;font-weight:bold;font-style:italic;left:977.20px;transform:translateX(-50%);-webkit-text-stroke:0.3px #303436;">A</span>
<svg style="left:978.80px;top:118.60px" width="4.6" height="4.6" viewBox="0 0 4.6 4.6"><circle cx="2.3" cy="2.3" r="2.1" fill="#4a8fe0"/><circle cx="2.3" cy="2.3" r="0.9" fill="#dbe9fa"/></svg>
<svg style="left:980.00px;top:114.40px" width="3" height="4" viewBox="0 0 3 4"><path d="M2.6 0L1 3.4L0.2 3Z" fill="#c9742b"/></svg>
<span id="t208" style="top:113.28px;font-size:9.2px;line-height:11.04px;color:#303436;white-space:pre;font-weight:bold;font-style:italic;left:990.90px;transform:translateX(-50%);-webkit-text-stroke:0.3px #303436;">A</span>
<svg style="left:992.50px;top:118.40px" width="4.8" height="4.8" viewBox="0 0 4.8 4.8"><circle cx="2.4" cy="2.4" r="2.3" fill="#55b33b"/><path d="M2.4 1V3.8M1 2.4H3.8" stroke="#e8f6e3" stroke-width="0.8"/></svg>
<svg style="left:993.70px;top:114.40px" width="3" height="4" viewBox="0 0 3 4"><path d="M2.6 0L1 3.4L0.2 3Z" fill="#c9742b"/></svg>
<svg style="left:953.60px;top:241.60px" width="9" height="9" viewBox="0 0 9 9"><rect x="0.4" y="0.5" width="8.2" height="6" fill="#5fae3c" stroke="#3f8a24" stroke-width="0.6"/><ellipse cx="4.5" cy="3.5" rx="1.6" ry="1.9" fill="#8fd06c"/><ellipse cx="3.6" cy="7.6" rx="2" ry="1" fill="#f0c53c" stroke="#c79a1a" stroke-width="0.4"/><ellipse cx="3.6" cy="6.5" rx="2" ry="1" fill="#f5d45c" stroke="#c79a1a" stroke-width="0.4"/><ellipse cx="6.8" cy="7.8" rx="1.7" ry="0.9" fill="#f5d45c" stroke="#c79a1a" stroke-width="0.4"/></svg>
<svg style="left:9.00px;top:38.80px" width="12" height="12" viewBox="0 0 12 12"><rect x="1.1" y="0.3" width="9.8" height="11.6" rx="0.6" fill="#6ea556" stroke="#4d8a3a" stroke-width="0.7"/><rect x="2.6" y="1.8" width="5.2" height="1.3" fill="#eef6ea"/><rect x="2.4" y="5.4" width="7.2" height="5" fill="#cfe6c4"/><path d="M2.4 7H9.6M2.4 8.7H9.6M4.8 5.4V10.4M7.2 5.4V10.4" stroke="#6ea556" stroke-width="0.6"/></svg>
<svg style="left:25.32px;top:44.44px" width="3.3600000000000003" height="1.92" viewBox="0 0 3.3600000000000003 1.92"><path d="M0 0H3.3600000000000003L1.6800000000000002 1.92Z" fill="#2e3436"/></svg>
<svg style="left:32.00px;top:38.80px" width="12" height="12" viewBox="0 0 12 12"><path d="M0.5 2.6Q0.5 1.6 1.4 1.6H4.2L5.2 2.8H10.8Q11.6 2.8 11.6 3.6V10.4H0.5Z" fill="#e3c795" stroke="#cfb07a" stroke-width="0.5"/><rect x="1.6" y="2.2" width="8.6" height="3" fill="#fbfaf8"/><path d="M0.4 4.4H11.6V10Q11.6 10.8 10.8 10.8H1.2Q0.4 10.8 0.4 10Z" fill="#f3ddb3" stroke="#d9bd8a" stroke-width="0.5"/></svg>
<svg style="left:48.32px;top:44.44px" width="3.3600000000000003" height="1.92" viewBox="0 0 3.3600000000000003 1.92"><path d="M0 0H3.3600000000000003L1.6800000000000002 1.92Z" fill="#2e3436"/></svg>
<svg style="left:56.00px;top:38.80px" width="12" height="12" viewBox="0 0 12 12"><rect x="1.2" y="0.5" width="9.6" height="11.2" rx="0.8" fill="#eeeeee" stroke="#c4c4c4" stroke-width="0.8"/><path d="M6 3V7" stroke="#e0454a" stroke-width="1.8"/><path d="M3.5 6.2H8.5L6 9.2Z" fill="#e0454a"/></svg>
<svg style="left:72.32px;top:44.44px" width="3.3600000000000003" height="1.92" viewBox="0 0 3.3600000000000003 1.92"><path d="M0 0H3.3600000000000003L1.6800000000000002 1.92Z" fill="#2e3436"/></svg>
<div style="left:79.50px;top:37.50px;width:1.00px;height:15.00px;background:#e9e6e3;"></div>
<svg style="left:84.00px;top:38.80px" width="12" height="12" viewBox="0 0 12 12"><rect x="1.4" y="0.5" width="9.4" height="11.2" fill="#dc4a42"/><rect x="1.4" y="0.5" width="2.6" height="11.2" fill="#f0a39d"/><path d="M4 11Q5.4 5 9.4 1.2V11Z" fill="#e8736c"/><path d="M4 11Q5.4 5 9.4 1.2" fill="none" stroke="#fdf1f0" stroke-width="0.9"/><path d="M9.4 1.2V11" stroke="#c93a33" stroke-width="0.8"/><rect x="1.4" y="0.5" width="9.4" height="11.2" fill="none" stroke="#c0413a" stroke-width="0.5"/></svg>
<svg style="left:102.00px;top:38.80px" width="12" height="12" viewBox="0 0 12 12"><rect x="3" y="0.8" width="6" height="3.4" fill="#f4f4f4" stroke="#8a8a8a" stroke-width="0.6"/><rect x="0.6" y="3.6" width="10.8" height="5.2" rx="0.8" fill="#43474a"/><rect x="2.6" y="7.2" width="6.8" height="4" fill="#f7f7f7" stroke="#6d6d6d" stroke-width="0.6"/><rect x="8.8" y="4.8" width="1.4" height="1" fill="#57c2f0"/><path d="M3.6 8.8H8.4M3.6 10H8.4" stroke="#9a9a9a" stroke-width="0.5"/></svg>
<svg style="left:120.00px;top:38.80px" width="12" height="12" viewBox="0 0 12 12"><rect x="1" y="0.6" width="9.6" height="10.8" fill="#f1f1f1" stroke="#c4c4c4" stroke-width="0.7"/><circle cx="5" cy="5" r="2.3" fill="#fdfdfd" stroke="#3d4143" stroke-width="0.9"/><path d="M6.7 6.8L9.8 10.2" stroke="#3d4143" stroke-width="1.4" stroke-linecap="round"/></svg>
<div style="left:135.50px;top:37.50px;width:1.00px;height:15.00px;background:#e9e6e3;"></div>
<svg style="left:141.60px;top:38.80px" width="12" height="12" viewBox="0 0 12 12"><path d="M2.9 0.4L8.2 8M10.3 0.4L5 8" stroke="#a9adaf" stroke-width="1.5"/><path d="M3.6 0.6L7.6 7M9.6 0.6L5.6 7" stroke="#d9dbdc" stroke-width="0.5"/><circle cx="4.6" cy="9.1" r="1.7" fill="#fdeaea" stroke="#b3191f" stroke-width="1.5"/><circle cx="8.7" cy="9.1" r="1.7" fill="#fdeaea" stroke="#b3191f" stroke-width="1.5"/></svg>
<svg style="left:159.00px;top:38.80px" width="12" height="12" viewBox="0 0 12 12"><rect x="1" y="0.6" width="6.4" height="8.2" fill="#f4f4f4" stroke="#b4b4b4" stroke-width="0.7"/><rect x="4.2" y="2.8" width="6.6" height="8.6" fill="#f8f8f8" stroke="#b4b4b4" stroke-width="0.7"/><path d="M9.4 5.6Q5.6 5.2 5.4 8.2L4.4 8L6 10.2L7.6 8.2L6.8 8.2Q7 6.6 9.4 7.2Z" fill="#6fbf4c"/></svg>
<svg style="left:175.00px;top:38.80px" width="12" height="12" viewBox="0 0 12 12"><rect x="1.2" y="1.2" width="6.6" height="8.6" rx="0.7" fill="#cfa568" stroke="#a8824a" stroke-width="0.6"/><rect x="3" y="0.3" width="3" height="1.9" rx="0.5" fill="#9a9a9a"/><rect x="4.4" y="3.4" width="6.6" height="8.2" fill="#f6f6f6" stroke="#b4b4b4" stroke-width="0.7"/><path d="M9.8 6Q6.2 5.6 6 8.4L5 8.2L6.6 10.4L8.2 8.4L7.4 8.4Q7.6 7 9.8 7.6Z" fill="#6fbf4c"/></svg>
<svg style="left:192.32px;top:44.44px" width="3.3600000000000003" height="1.92" viewBox="0 0 3.3600000000000003 1.92"><path d="M0 0H3.3600000000000003L1.6800000000000002 1.92Z" fill="#2e3436"/></svg>
<div style="left:198.90px;top:37.50px;width:1.00px;height:15.00px;background:#e9e6e3;"></div>
<svg style="left:204.60px;top:38.80px" width="12" height="12" viewBox="0 0 12 12"><path d="M5.5 -0.2Q6.3 -0.6 7.1 -0.2L7.6 4.2H4.9Z" fill="#e3c795" stroke="#b89660" stroke-width="0.4"/><rect x="3.1" y="3.9" width="7" height="2.4" fill="#d9b070" stroke="#a88a58" stroke-width="0.4"/><path d="M3.1 5.4H10.1" stroke="#8a8a8a" stroke-width="0.8"/><rect x="3.1" y="6.3" width="7" height="3.4" fill="#262626"/><path d="M0 11.4Q3 10 6 10.6T10.4 10.2V11.8H0Z" fill="#f09a2c"/></svg>
<svg style="left:222.50px;top:38.80px" width="12" height="12" viewBox="0 0 12 12"><path d="M1.6 9.8L5.6 1.2H7.4L8.6 6.6" fill="none" stroke="#3d4143" stroke-width="1.9"/><path d="M3.4 6.8H8" stroke="#3d4143" stroke-width="1.4"/><path d="M6.4 8.4L9.2 5.8L12.2 7L11.4 10.4L8 12Z" fill="#f49ccb" stroke="#e070ac" stroke-width="0.4"/></svg>
<div style="left:238.50px;top:37.50px;width:1.00px;height:15.00px;background:#e9e6e3;"></div>
<svg style="left:242.60px;top:38.80px" width="12" height="12" viewBox="0 0 12 12"><path d="M0.6 5L4.6 1V3.4Q10 3.2 10.6 7.6Q10.8 9.4 9.8 10.4Q9.6 6.6 4.6 6.8V9.2Z" fill="#f3b73e" stroke="#d3961e" stroke-width="0.5"/></svg>
<svg style="left:259.02px;top:44.44px" width="3.3600000000000003" height="1.92" viewBox="0 0 3.3600000000000003 1.92"><path d="M0 0H3.3600000000000003L1.6800000000000002 1.92Z" fill="#2e3436"/></svg>
<svg style="left:266.00px;top:38.80px" width="12" height="12" viewBox="0 0 12 12"><path d="M11.4 5L7.4 1V3.4Q2 3.2 1.4 7.6Q1.2 9.4 2.2 10.4Q2.4 6.6 7.4 6.8V9.2Z" fill="#d9d8d6" stroke="#cccbc9" stroke-width="0.5"/></svg>
<svg style="left:282.32px;top:44.44px" width="3.3600000000000003" height="1.92" viewBox="0 0 3.3600000000000003 1.92"><path d="M0 0H3.3600000000000003L1.6800000000000002 1.92Z" fill="#c6c4c2"/></svg>
<div style="left:289.50px;top:37.50px;width:1.00px;height:15.00px;background:#e9e6e3;"></div>
<svg style="left:295.00px;top:38.80px" width="12" height="12" viewBox="0 0 12 12"><circle cx="4.4" cy="4.2" r="3.1" fill="#fdfdfd" stroke="#3d4143" stroke-width="0.9"/><path d="M6.6 6.4L7.8 7.6" stroke="#3d4143" stroke-width="1.2"/><path d="M5.6 10.6L9.6 6L11 7.2L7 11.8L5.2 12.2Z" fill="#2f3335"/><circle cx="10.8" cy="5.4" r="1.1" fill="#e77fd0"/><path d="M5.2 12.2L6.2 10.8" stroke="#f2c94c" stroke-width="0.9"/></svg>
<span id="t209" style="top:38.16px;font-size:8.4px;line-height:10.08px;color:#2f3335;white-space:pre;font-weight:bold;left:318.60px;transform:translateX(-50%) scaleX(0.8600);">abc</span>
<svg style="left:313.00px;top:38.80px" width="12" height="12" viewBox="0 0 12 12"><path d="M4.6 8.4L6.6 10.6L10.6 6.8" fill="none" stroke="#55b33b" stroke-width="1.7"/></svg>
<div style="left:329.10px;top:37.50px;width:1.00px;height:15.00px;background:#e9e6e3;"></div>
<svg style="left:333.40px;top:38.80px" width="12" height="12" viewBox="0 0 12 12"><rect x="0.6" y="0.8" width="10.8" height="10.4" fill="#fbfbfb" stroke="#a3a3a3" stroke-width="0.6"/><path d="M0.6 3.2H11.4M0.6 5.4H11.4M0.6 7.8H11.4M0.6 9.6H11.4M3.3 0.8V11.2M6 0.8V11.2M8.7 0.8V11.2" stroke="#bdbdbd" stroke-width="0.5"/><rect x="0.6" y="0.8" width="10.8" height="2.4" fill="#6fbf4c"/><rect x="0.6" y="5.4" width="10.8" height="2.4" fill="#ef8a2c"/><path d="M3.3 0.8V3.2M6 0.8V3.2M8.7 0.8V3.2M3.3 5.4V7.8M6 5.4V7.8M8.7 5.4V7.8" stroke="#fff" stroke-width="0.5"/></svg>
<svg style="left:349.32px;top:44.44px" width="3.3600000000000003" height="1.92" viewBox="0 0 3.3600000000000003 1.92"><path d="M0 0H3.3600000000000003L1.6800000000000002 1.92Z" fill="#2e3436"/></svg>
<svg style="left:357.00px;top:38.80px" width="12" height="12" viewBox="0 0 12 12"><rect x="0.6" y="0.8" width="10.8" height="10.4" fill="#fbfbfb" stroke="#a3a3a3" stroke-width="0.6"/><path d="M0.6 3.2H11.4M0.6 5.4H11.4M0.6 7.8H11.4M0.6 9.6H11.4M3.3 0.8V11.2M6 0.8V11.2M8.7 0.8V11.2" stroke="#bdbdbd" stroke-width="0.5"/><rect x="0.6" y="0.8" width="10.8" height="2.4" fill="#6fbf4c"/><rect x="4.6" y="0.8" width="2.8" height="10.4" fill="#ef8a2c"/><path d="M4.6 3.2H7.4M4.6 5.4H7.4M4.6 7.8H7.4" stroke="#fff" stroke-width="0.5"/></svg>
<svg style="left:372.92px;top:44.44px" width="3.3600000000000003" height="1.92" viewBox="0 0 3.3600000000000003 1.92"><path d="M0 0H3.3600000000000003L1.6800000000000002 1.92Z" fill="#2e3436"/></svg>
<div style="left:379.50px;top:37.50px;width:1.00px;height:15.00px;background:#e9e6e3;"></div>
<svg style="left:385.50px;top:38.80px" width="12" height="12" viewBox="0 0 12 12"><path d="M3.2 1V10.6M0.4 7.4L3.2 10.8L6 7.4" fill="none" stroke="#3d4143" stroke-width="0.95"/><path d="M8.8 11V1.4M6 4.6L8.8 1.2L11.6 4.6" fill="none" stroke="#3d4143" stroke-width="0.95"/></svg>
<span id="t210" style="top:37.88px;font-size:8.2px;line-height:9.84px;color:#2f3335;white-space:pre;font-weight:bold;left:406.40px;transform:translateX(-50%) scaleX(0.8500);">A</span>
<svg style="left:404.00px;top:38.80px" width="12" height="12" viewBox="0 0 12 12"><path d="M8.8 1.6V10.8M6.2 7.6L8.8 11L11.4 7.6" fill="none" stroke="#3d4143" stroke-width="0.95"/></svg>
<span id="t211" style="top:41.16px;font-size:10.4px;line-height:12.48px;color:#2f3335;white-space:pre;font-weight:bold;left:424.20px;transform:translateX(-50%) scaleX(0.9000);">z</span>
<svg style="left:421.60px;top:38.80px" width="12" height="12" viewBox="0 0 12 12"><path d="M8.8 11V1.4M6.2 4.6L8.8 1.2L11.4 4.6" fill="none" stroke="#3d4143" stroke-width="0.95"/></svg>
<svg style="left:439.00px;top:38.80px" width="12" height="12" viewBox="0 0 12 12"><path d="M0.8 1.4H10.4L7 5.6V10.6L4.6 9.4V5.6Z" fill="#f0f0f0" stroke="#cdcdcd" stroke-width="0.9"/><path d="M6.2 4.6L9.8 11" stroke="#8a8c8d" stroke-width="1.3"/></svg>
<div style="left:454.50px;top:37.50px;width:1.00px;height:15.00px;background:#e9e6e3;"></div>
<svg style="left:460.00px;top:38.80px" width="12" height="12" viewBox="0 0 12 12"><rect x="0.5" y="1.4" width="10.4" height="8.6" fill="#4f97e2" stroke="#3b78bf" stroke-width="0.8"/><path d="M1 6.6Q3.4 4.8 5.8 6.2Q8 7.4 10.4 5.8V9.6H1Z" fill="#f0c060"/><path d="M1 8.2Q4 6.6 7.4 8.2V9.6H1Z" fill="#e8742a"/><circle cx="9.4" cy="9.4" r="2.5" fill="#55b33b"/><path d="M9.4 7.8V11M7.8 9.4H11" stroke="#7fd85f" stroke-width="1.2"/></svg>
<svg style="left:477.70px;top:38.80px" width="12" height="12" viewBox="0 0 12 12"><rect x="1" y="5" width="2.8" height="6.4" fill="#7ccf5a"/><rect x="4.6" y="1" width="2.8" height="10.4" fill="#b77de0"/><rect x="8.2" y="3.4" width="2.8" height="8" fill="#ef8f82"/></svg>
<svg style="left:495.00px;top:38.80px" width="12" height="12" viewBox="0 0 12 12"><rect x="0.8" y="0.8" width="10.4" height="10.4" fill="#fbfbfb" stroke="#a3a3a3" stroke-width="0.6"/><rect x="0.8" y="0.8" width="10.4" height="2.4" fill="#6fbf4c"/><rect x="0.8" y="3.2" width="2.6" height="8" fill="#d9d9d9"/><path d="M0.8 5.6H3.4M0.8 8H3.4" stroke="#fff" stroke-width="0.5"/><path d="M10 4V7.4H6.8V5.8L4 8.2L6.8 10.8V9.2H11.4V4Z" fill="#b070e0"/></svg>
<div style="left:512.10px;top:37.50px;width:1.00px;height:15.00px;background:#e9e6e3;"></div>
<span id="t212" style="top:36.36px;font-size:13.4px;line-height:16.08px;color:#2f3335;white-space:pre;font-weight:bold;left:522.00px;transform:translateX(-50%) scaleX(0.9500);-webkit-text-stroke:0.3px #2f3335;">Ω</span>
<svg style="left:532.82px;top:44.44px" width="3.3600000000000003" height="1.92" viewBox="0 0 3.3600000000000003 1.92"><path d="M0 0H3.3600000000000003L1.6800000000000002 1.92Z" fill="#2e3436"/></svg>
<svg style="left:540.80px;top:38.80px" width="12" height="12" viewBox="0 0 12 12"><ellipse cx="7.8" cy="3.4" rx="2.5" ry="1.8" transform="rotate(-45 7.8 3.4)" fill="none" stroke="#8f9395" stroke-width="1.7"/><ellipse cx="3.4" cy="7.8" rx="2.5" ry="1.8" transform="rotate(-45 3.4 7.8)" fill="none" stroke="#8f9395" stroke-width="1.7"/><path d="M4.4 6.8L6.8 4.4" stroke="#6f7375" stroke-width="1.4"/><circle cx="9" cy="9.2" r="2.6" fill="#55b33b"/><path d="M9 7.6V10.8M7.4 9.2H10.6" stroke="#7fd85f" stroke-width="1.2"/></svg>
<svg style="left:558.00px;top:38.80px" width="12" height="12" viewBox="0 0 12 12"><ellipse cx="5.6" cy="4.6" rx="5.2" ry="4.2" fill="#f7cf58" stroke="#e3b030" stroke-width="0.5"/><path d="M2.2 7L1.8 10.2L5 8.4Z" fill="#f7cf58"/><ellipse cx="5" cy="3.4" rx="3.6" ry="2" fill="#fbe08a"/><circle cx="9.6" cy="9.2" r="2.6" fill="#55b33b"/><path d="M9.6 7.6V10.8M8 9.2H11.2" stroke="#7fd85f" stroke-width="1.2"/></svg>
<svg style="left:575.60px;top:38.80px" width="12" height="12" viewBox="0 0 12 12"><rect x="1.8" y="0.6" width="8.4" height="10.8" fill="#efefef" stroke="#b9b9b9" stroke-width="0.6"/><rect x="2.6" y="1.6" width="6.8" height="1.8" fill="#ef8a2c"/><rect x="2.6" y="8.6" width="6.8" height="1.8" fill="#ef8a2c"/></svg>
<div style="left:591.80px;top:37.50px;width:1.00px;height:15.00px;background:#e9e6e3;"></div>
<svg style="left:598.50px;top:38.80px" width="12" height="12" viewBox="0 0 12 12"><rect x="0.6" y="0.6" width="8" height="7" fill="#f6e9e9" stroke="#c9a9a9" stroke-width="0.5"/><path d="M0.6 2.4H8.6M0.6 4.2H8.6M3 0.6V7.6M5.6 0.6V7.6" stroke="#e0c4c4" stroke-width="0.4"/><rect x="4.6" y="3.4" width="4.6" height="2.6" fill="#f4f4f4" stroke="#8a8a8a" stroke-width="0.5"/><rect x="3" y="5.4" width="8.2" height="4" rx="0.6" fill="#43474a"/><rect x="4.6" y="8" width="5" height="3.2" fill="#f7f7f7" stroke="#6d6d6d" stroke-width="0.5"/></svg>
<svg style="left:614.00px;top:38.80px" width="12" height="12" viewBox="0 0 12 12"><rect x="0.6" y="0.8" width="10.8" height="10.4" fill="#fbfbfb" stroke="#a3a3a3" stroke-width="0.6"/><path d="M0.6 5.4H11.4M0.6 7.8H11.4M0.6 9.6H11.4M6 0.8V11.2M8.7 0.8V11.2" stroke="#bdbdbd" stroke-width="0.5"/><rect x="0.6" y="0.8" width="10.8" height="2.6" fill="#3a87e0"/><rect x="0.6" y="0.8" width="3" height="10.4" fill="#3a87e0"/><path d="M6 0.8V3.4M8.7 0.8V3.4M0.6 5.4H3.6M0.6 7.8H3.6" stroke="#9cc3f0" stroke-width="0.5"/></svg>
<svg style="left:630.12px;top:44.44px" width="3.3600000000000003" height="1.92" viewBox="0 0 3.3600000000000003 1.92"><path d="M0 0H3.3600000000000003L1.6800000000000002 1.92Z" fill="#2e3436"/></svg>
<svg style="left:638.50px;top:38.80px" width="12" height="12" viewBox="0 0 12 12"><rect x="0.6" y="1.6" width="10.8" height="9.6" fill="#fbfbfb" stroke="#b3b3b3" stroke-width="0.6"/><path d="M0.6 4H11.4M0.6 6.4H11.4M0.6 8.8H11.4M3.4 1.6V11.2M8.6 1.6V11.2" stroke="#c9c9c9" stroke-width="0.5"/><path d="M6 2.6V11.6" stroke="#55b33b" stroke-width="1" stroke-dasharray="1.4 0.9"/><path d="M4 2.8L6 0.2L8 2.8Z" fill="#55b33b"/></svg>
<div style="left:654.50px;top:37.50px;width:1.00px;height:15.00px;background:#e9e6e3;"></div>
<svg style="left:660.50px;top:38.80px" width="12" height="12" viewBox="0 0 12 12"><circle cx="4.8" cy="4" r="3.4" fill="#ecebea" stroke="#c3c1bf" stroke-width="0.7"/><rect x="5.8" y="2.8" width="5.8" height="6.2" rx="1" fill="#ecebea" stroke="#c3c1bf" stroke-width="0.7"/><path d="M1.2 10.8L4 5.2L6.8 10.8Z" fill="#ecebea" stroke="#c3c1bf" stroke-width="0.7"/></svg>
<div style="left:138.00px;top:58.00px;width:1.00px;height:15.50px;background:#e9e6e3;"></div>
<span id="t213" style="top:58.94px;font-size:11.6px;line-height:13.92px;color:#4a4d4f;white-space:pre;font-weight:bold;left:147.00px;transform:translateX(-50%) scaleX(0.9200);-webkit-text-stroke:0.35px #4a4d4f;">B</span>
<span id="t214" class="sf" style="top:58.70px;font-size:12px;line-height:14.40px;color:#4a4d4f;white-space:pre;font-style:italic;left:164.00px;transform:translateX(-50%);font-weight:bold;">I</span>
<span id="t215" style="top:58.56px;font-size:10.4px;line-height:12.48px;color:#55585a;white-space:pre;font-weight:bold;left:181.20px;transform:translateX(-50%) scaleX(0.9500);">U</span>
<div style="left:176.20px;top:70.40px;width:10.40px;height:1.20px;background:#55585a;"></div>
<div style="left:192.00px;top:58.00px;width:1.00px;height:15.50px;background:#e9e6e3;"></div>
<span id="t216" style="top:57.08px;font-size:11.2px;line-height:13.44px;color:#3a3e40;white-space:pre;font-weight:bold;left:202.70px;transform:translateX(-50%);">A</span>
<div style="left:196.30px;top:68.80px;width:12.80px;height:2.70px;background:#d81e1e;"></div>
<svg style="left:212.72px;top:65.64px" width="3.3600000000000003" height="1.92" viewBox="0 0 3.3600000000000003 1.92"><path d="M0 0H3.3600000000000003L1.6800000000000002 1.92Z" fill="#2e3436"/></svg>
<svg style="left:220.60px;top:57.60px" width="11" height="11" viewBox="0 0 11 11"><path d="M2.6 3.4Q5.4 -0.6 9.2 2.2Q11.2 4.4 9.6 7.8Q8.4 10 6 10.2L2.2 6.2Z" fill="#e9e9e9" stroke="#6d7173" stroke-width="0.8"/><ellipse cx="4.2" cy="4.6" rx="1.7" ry="2.6" transform="rotate(-35 4.2 4.6)" fill="#8a8e90" stroke="#55595b" stroke-width="0.6"/><path d="M6.4 1.6Q9 3.6 8 8.4" fill="none" stroke="#fafafa" stroke-width="1"/><path d="M3.4 7.2Q3 9.4 4.4 10.4Q5.6 9.6 4.8 7.8Z" fill="#ef8a2c"/></svg>
<div style="left:219.60px;top:68.80px;width:12.80px;height:2.70px;background:#f8ef14;"></div>
<svg style="left:236.22px;top:65.64px" width="3.3600000000000003" height="1.92" viewBox="0 0 3.3600000000000003 1.92"><path d="M0 0H3.3600000000000003L1.6800000000000002 1.92Z" fill="#2e3436"/></svg>
<div style="left:243.70px;top:58.00px;width:1.00px;height:15.50px;background:#e9e6e3;"></div>
<svg style="left:249.30px;top:62.00px" width="10.4" height="8" viewBox="0 0 10.4 8"><rect x="0" y="0.0" width="10.4" height="1" fill="#4a4e50"/><rect x="0" y="2.2" width="7" height="1" fill="#4a4e50"/><rect x="0" y="4.4" width="10.4" height="1" fill="#4a4e50"/><rect x="0" y="6.6000000000000005" width="7" height="1" fill="#4a4e50"/></svg>
<svg style="left:266.80px;top:62.00px" width="10.4" height="8" viewBox="0 0 10.4 8"><rect x="0" y="0.0" width="10.4" height="1" fill="#4a4e50"/><rect x="1.7" y="2.2" width="7" height="1" fill="#4a4e50"/><rect x="0" y="4.4" width="10.4" height="1" fill="#4a4e50"/><rect x="1.7" y="6.6000000000000005" width="7" height="1" fill="#4a4e50"/></svg>
<svg style="left:284.40px;top:62.00px" width="10.4" height="8" viewBox="0 0 10.4 8"><rect x="0" y="0.0" width="10.4" height="1" fill="#4a4e50"/><rect x="3.4" y="2.2" width="7" height="1" fill="#4a4e50"/><rect x="0" y="4.4" width="10.4" height="1" fill="#4a4e50"/><rect x="3.4" y="6.6000000000000005" width="7" height="1" fill="#4a4e50"/></svg>
<div style="left:300.00px;top:58.00px;width:1.00px;height:15.50px;background:#e9e6e3;"></div>
<svg style="left:306.20px;top:62.00px" width="11" height="8" viewBox="0 0 11 8"><rect x="0" y="0" width="9" height="1" fill="#4a4e50"/><rect x="0" y="2.2" width="9" height="1" fill="#4a4e50"/><rect x="0" y="4.4" width="5" height="1" fill="#4a4e50"/><rect x="0" y="6.6" width="5" height="1" fill="#4a4e50"/><path d="M5.6 5.6L7.2 7.4L10.4 3.6" fill="none" stroke="#55b33b" stroke-width="1.4"/></svg>
<svg style="left:323.20px;top:60.00px" width="11" height="11" viewBox="0 0 11 11"><rect x="0.4" y="0.4" width="10.2" height="10.2" fill="#e4e3e2" stroke="#cfcdcb" stroke-width="0.6"/><path d="M0.4 2.6H10.6M0.4 8.4H10.6M3.6 0.4V10.6M7.2 0.4V10.6" stroke="#d6d4d2" stroke-width="0.5"/><rect x="2.2" y="2.6" width="6.4" height="5.8" fill="#d2d1cf"/></svg>
<div style="left:340.40px;top:58.00px;width:1.00px;height:15.50px;background:#e9e6e3;"></div>
<svg style="left:345.80px;top:61.00px" width="10.4" height="4" viewBox="0 0 10.4 4"><rect x="0" y="0" width="10.4" height="1" fill="#4a4e50"/><rect x="0" y="2.1" width="6.8" height="1" fill="#4a4e50"/></svg>
<svg style="left:363.50px;top:64.20px" width="10.4" height="4" viewBox="0 0 10.4 4"><rect x="0" y="0" width="10.4" height="1" fill="#4a4e50"/><rect x="0" y="2.1" width="6.8" height="1" fill="#4a4e50"/></svg>
<div style="left:377.00px;top:56.50px;width:18.00px;height:18.50px;background:#d5d0cc;border-radius:3px;"></div>
<svg style="left:380.80px;top:66.40px" width="10.4" height="4" viewBox="0 0 10.4 4"><rect x="0" y="0" width="10.4" height="1" fill="#4a4e50"/><rect x="0" y="2.1" width="6.8" height="1" fill="#4a4e50"/></svg>
<div style="left:397.00px;top:58.00px;width:1.00px;height:15.50px;background:#e9e6e3;"></div>
<svg style="left:400.40px;top:60.00px" width="12" height="11.4" viewBox="0 0 12 11.4"><rect x="0.4" y="0.6" width="10.6" height="7.4" fill="#5fae3c" stroke="#3f8a24" stroke-width="0.7"/><ellipse cx="5.7" cy="4.3" rx="2" ry="2.4" fill="#8fd06c"/><ellipse cx="4.6" cy="9.4" rx="2.4" ry="1.2" fill="#f0c53c" stroke="#c79a1a" stroke-width="0.5"/><ellipse cx="4.6" cy="8" rx="2.4" ry="1.2" fill="#f5d45c" stroke="#c79a1a" stroke-width="0.5"/><ellipse cx="8.6" cy="9.6" rx="2.2" ry="1.1" fill="#f5d45c" stroke="#c79a1a" stroke-width="0.5"/></svg>
<svg style="left:417.12px;top:65.64px" width="3.3600000000000003" height="1.92" viewBox="0 0 3.3600000000000003 1.92"><path d="M0 0H3.3600000000000003L1.6800000000000002 1.92Z" fill="#2e3436"/></svg>
<span id="t217" style="top:59.52px;font-size:10.8px;line-height:12.96px;color:#3a3e40;white-space:pre;font-weight:bold;left:431.50px;transform:translateX(-50%) scaleX(0.9000);-webkit-text-stroke:0.3px #3a3e40;">%</span>
<span id="t218" style="top:59.76px;font-size:10.4px;line-height:12.48px;color:#3a3e40;white-space:pre;font-weight:bold;left:448.90px;transform:translateX(-50%) scaleX(0.8000);-webkit-text-stroke:0.3px #3a3e40;">7.4</span>
<svg style="left:461.40px;top:60.40px" width="10.6" height="10.4" viewBox="0 0 10.6 10.4"><rect x="0.5" y="1.4" width="9.6" height="8.4" rx="0.8" fill="#fbfbfb" stroke="#3d4143" stroke-width="1"/><rect x="0.5" y="1.4" width="9.6" height="2.6" fill="#3d4143"/><path d="M2.4 5.6H3.6M4.7 5.6H5.9M7 5.6H8.2M2.4 7.6H3.6M4.7 7.6H5.9" stroke="#3d4143" stroke-width="0.9"/><path d="M2.8 0.2V2M7.8 0.2V2" stroke="#3d4143" stroke-width="1"/></svg>
<div style="left:477.40px;top:58.00px;width:1.00px;height:15.50px;background:#e9e6e3;"></div>
<span id="t219" style="top:58.46px;font-size:10.4px;line-height:12.48px;color:#3a3e40;white-space:pre;left:487.60px;transform:translateX(-50%) scaleX(0.7800);">0.0</span>
<svg style="left:489.40px;top:67.00px" width="5.4" height="5.4" viewBox="0 0 5.4 5.4"><circle cx="2.7" cy="2.7" r="2.7" fill="#55b33b"/><path d="M2.7 1V4.4M1 2.7H4.4" stroke="#fff" stroke-width="0.9"/></svg>
<span id="t220" style="top:58.46px;font-size:10.4px;line-height:12.48px;color:#3a3e40;white-space:pre;left:505.20px;transform:translateX(-50%) scaleX(0.7800);">0.0</span>
<svg style="left:507.40px;top:67.20px" width="5" height="5" viewBox="0 0 5 5"><path d="M0.4 0.4L4.6 4.6M4.6 0.4L0.4 4.6" stroke="#e23b3b" stroke-width="1.5"/></svg>
<div style="left:516.50px;top:58.00px;width:1.00px;height:15.50px;background:#e9e6e3;"></div>
<svg style="left:521.60px;top:60.60px" width="11" height="10" viewBox="0 0 11 10"><path d="M0 4.3H3V2.6L6 5.2L3 7.8V6.1H0Z" fill="#2f8ae4"/><rect x="6.2" y="2.6" width="4.8" height="1" fill="#55595b"/><rect x="6.2" y="4.8" width="4.8" height="1" fill="#55595b"/><rect x="6.2" y="7" width="3" height="1" fill="#9a9c9c"/><path d="M5.8 1.4V9.4" stroke="#c4c2c0" stroke-width="0.5" stroke-dasharray="0.8 0.6"/></svg>
<svg style="left:539.60px;top:60.60px" width="11" height="10" viewBox="0 0 11 10"><path d="M6 4.3H3V2.6L0 5.2L3 7.8V6.1H6Z" fill="#a45ce0"/><rect x="6.2" y="2.6" width="4.8" height="1" fill="#55595b"/><rect x="6.2" y="4.8" width="4.8" height="1" fill="#55595b"/><rect x="6.2" y="7" width="3" height="1" fill="#9a9c9c"/><path d="M5.8 1.4V9.4" stroke="#c4c2c0" stroke-width="0.5" stroke-dasharray="0.8 0.6"/></svg>
<div style="left:556.60px;top:58.00px;width:1.00px;height:15.50px;background:#e9e6e3;"></div>
<svg style="left:560.40px;top:60.00px" width="11.4" height="11.4" viewBox="0 0 11.4 11.4"><rect x="0.9" y="0.9" width="9.8" height="9.4" fill="#fdfdfd" stroke="#e8862e" stroke-width="1.8"/><path d="M5.7 1.4V10M1.4 5.7H10" stroke="#cfcfcf" stroke-width="0.7"/></svg>
<svg style="left:576.32px;top:65.64px" width="3.3600000000000003" height="1.92" viewBox="0 0 3.3600000000000003 1.92"><path d="M0 0H3.3600000000000003L1.6800000000000002 1.92Z" fill="#2e3436"/></svg>
<svg style="left:583.00px;top:59.40px" width="11.6" height="12.6" viewBox="0 0 11.6 12.6"><path d="M2.4 8.2L8 1.4L9.6 2.6L4 9.4L2 9.8Z" fill="#3d4143"/><path d="M8 1.4L9 0.2L10.6 1.4L9.6 2.6Z" fill="#c86fd8"/><path d="M1.4 10.8L9.8 9.2" stroke="#55595b" stroke-width="0.7"/><path d="M1 12L9.4 10.6" stroke="#8a8c8d" stroke-width="0.6" stroke-dasharray="1.2 0.6"/><path d="M2 9.8L2.4 8.8" stroke="#f2c94c" stroke-width="0.8"/></svg>
<svg style="left:599.82px;top:65.64px" width="3.3600000000000003" height="1.92" viewBox="0 0 3.3600000000000003 1.92"><path d="M0 0H3.3600000000000003L1.6800000000000002 1.92Z" fill="#2e3436"/></svg>
<svg style="left:607.20px;top:59.40px" width="11.8" height="12.6" viewBox="0 0 11.8 12.6"><rect x="0.6" y="0.6" width="10.6" height="8.6" fill="#dfeaf7" stroke="#3a87e0" stroke-width="1.1"/><ellipse cx="6" cy="4.8" rx="2.2" ry="2.4" fill="#f1f1f1" stroke="#6d7173" stroke-width="0.7"/><path d="M5.6 2.8V5.4" stroke="#6d7173" stroke-width="0.7"/><rect x="0" y="9.6" width="11.8" height="2.6" fill="#1f6fc9"/></svg>
<svg style="left:623.62px;top:65.64px" width="3.3600000000000003" height="1.92" viewBox="0 0 3.3600000000000003 1.92"><path d="M0 0H3.3600000000000003L1.6800000000000002 1.92Z" fill="#2e3436"/></svg>
<div style="left:630.80px;top:58.00px;width:1.00px;height:15.50px;background:#e9e6e3;"></div>
<svg style="left:635.20px;top:59.80px" width="11.6" height="11.6" viewBox="0 0 11.6 11.6"><rect x="0.5" y="0.5" width="10.6" height="10.6" fill="#efeeed" stroke="#b9b7b5" stroke-width="0.7"/><rect x="1.6" y="1.6" width="8.4" height="2" fill="#e2453c"/><rect x="1.6" y="4.6" width="4" height="2" fill="#4a9ae8"/><rect x="1.6" y="7.6" width="6.4" height="2" fill="#79c75a"/></svg>
<svg style="left:651.32px;top:65.64px" width="3.3600000000000003" height="1.92" viewBox="0 0 3.3600000000000003 1.92"><path d="M0 0H3.3600000000000003L1.6800000000000002 1.92Z" fill="#2e3436"/></svg>
</div></body></html>
